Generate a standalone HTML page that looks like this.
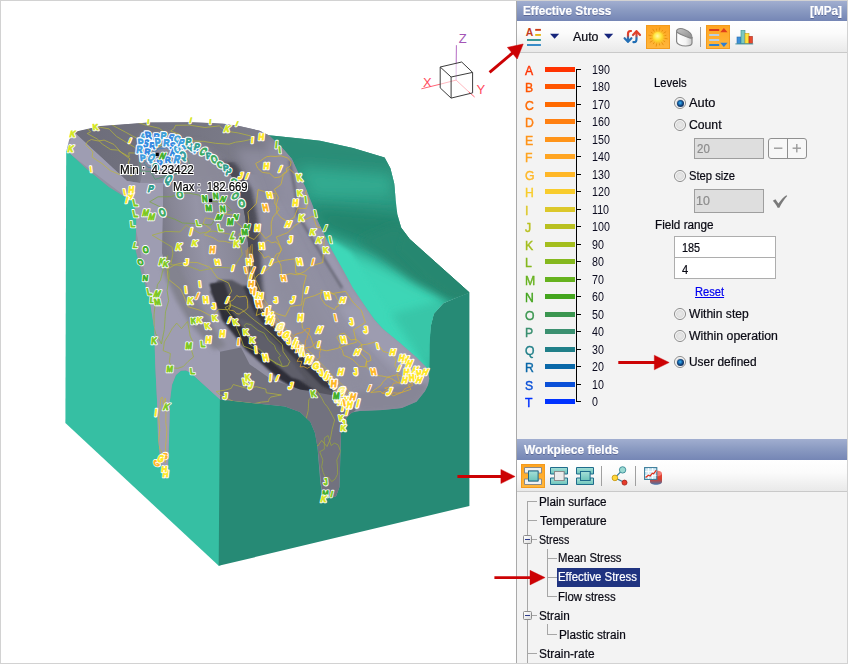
<!DOCTYPE html>
<html lang="en">
<head>
<meta charset="utf-8">
<title>Effective Stress</title>
<style>
html,body{margin:0;padding:0;}
body{width:848px;height:664px;position:relative;overflow:hidden;background:#fff;font-family:"Liberation Sans",sans-serif;font-size:12px;color:#0a0a14;}
#frame{position:absolute;left:0;top:0;width:846px;height:662px;border:1px solid #d2d2d2;z-index:50;pointer-events:none;}
#view{position:absolute;left:0;top:0;width:516px;height:664px;}
#panel{position:absolute;left:516px;top:0;width:332px;height:664px;background:#f3f3f3;border-left:1px solid #aaaaaa;box-sizing:border-box;}
.hdr{position:absolute;left:517px;width:331px;background:linear-gradient(#a1aed0,#8b9bc2 45%,#7586b5);}
#hdr1{top:1px;height:20px;}
#hdr2{top:439px;height:21px;}
.tb{position:absolute;left:517px;width:331px;background:linear-gradient(#ffffff,#fbfbfb 40%,#e9e9e9);border-bottom:1px solid #c9c9c9;box-sizing:border-box;}
#tb1{top:21px;height:32px;}
#tb2{top:460px;height:32px;}
span.t,span.hb,span.halo{position:absolute;white-space:pre;line-height:14px;height:14px;font-size:12px;transform-origin:0 0;display:inline-block;-webkit-text-stroke:0.22px currentColor;}
span.hb{font-weight:bold;color:#fff;text-shadow:0 1px 0 rgba(60,70,120,.55);}
span.halo{color:#000;text-shadow:-1px 0 0 #fff,1px 0 0 #fff,0 -1px 0 #fff,0 1px 0 #fff,-1px -1px 0 #fff,1px 1px 0 #fff,-1px 1px 0 #fff,1px -1px 0 #fff;}
span.ll{position:absolute;left:525.2px;font-size:13px;line-height:15px;height:15px;-webkit-text-stroke:0.42px currentColor;transform:scaleX(0.94);transform-origin:0 0;display:inline-block;}
span.ln{position:absolute;left:592.3px;font-size:12px;line-height:14px;height:14px;transform:scaleX(0.89);transform-origin:0 0;display:inline-block;color:#0a0a1e;}
i.lb{position:absolute;left:545px;width:30px;height:5px;display:block;}
i.lt{position:absolute;left:577px;width:4px;height:1px;background:#000;display:block;}
#axis{position:absolute;left:576px;top:69px;width:1px;height:333px;background:#000;}
.radio{position:absolute;left:674px;width:10px;height:10px;border-radius:50%;border:1px solid #8a8a8a;background:radial-gradient(circle at 50% 50%,#e9e9e9 0,#dedede 50%,#fcfcfc 66%,#ffffff 100%);}
.radio.on::after{content:"";position:absolute;left:1.5px;top:1.5px;width:7px;height:7px;border-radius:50%;background:radial-gradient(circle at 45% 42%,#40b8f4 0,#1c7cc4 24%,#103a70 54%,#0a2850 100%);}
.inp{position:absolute;box-sizing:border-box;border:1px solid #a5a5a5;}
.inp.dis{background:#dedede;border-color:#9e9e9e;}
.inp.en{background:#fff;border-color:#adadad;}
#pm{position:absolute;left:768px;top:138px;width:39px;height:21px;box-sizing:border-box;border:1px solid #8f8f8f;border-radius:3px;background:#f7f7f7;}
#pm::before{content:"";position:absolute;left:18px;top:0;width:1px;height:19px;background:#8f8f8f;}
#sel{position:absolute;left:557px;top:568px;width:83px;height:19px;background:#1f3380;}
.tl{position:absolute;background:#a6a6a6;}
.exp{position:absolute;left:523px;width:7px;height:7px;border-radius:1.5px;border:1px solid #8c8c8c;background:linear-gradient(135deg,#fff,#dcdcdc);}
.exp::after{content:"";position:absolute;left:1px;top:3px;width:5px;height:1px;background:#2d3c8c;}
.obox{position:absolute;width:22px;height:22px;border:1px solid #f39b1e;background:linear-gradient(#ffa521,#ffb63c);}
.sep{position:absolute;width:1px;background:#a0a0a0;}
svg{position:absolute;overflow:visible;}
</style>
</head>
<body>
<div id="view">
<svg id="model" width="516" height="664" viewBox="0 0 516 664" style="left:0;top:0">
<defs>
  <filter id="b1" x="-20%" y="-20%" width="140%" height="140%"><feGaussianBlur stdDeviation="1.2"/></filter>
  <filter id="b2" x="-20%" y="-20%" width="140%" height="140%"><feGaussianBlur stdDeviation="2.2"/></filter>
  <filter id="b4" x="-30%" y="-30%" width="160%" height="160%"><feGaussianBlur stdDeviation="4"/></filter>
  <filter id="b7" x="-40%" y="-40%" width="180%" height="180%"><feGaussianBlur stdDeviation="7"/></filter>
  <clipPath id="cTop"><path d="M266,134.6 L269,135.2 L300,138.4 L320,140.8 L353,148 L384.6,157.6 L390.4,168.2 L394.2,183.6 L396,203 L397.3,214 L401.1,227.4 L409.6,239 L469.4,292.6 L458,297 L443.3,303.3 L433.8,313.8 L430.6,326.5 L429.6,345 L429.3,382 L300,260 Z"/></clipPath>
  <clipPath id="cGrey"><path d="M73.9,132 L100.3,126 L135,123.6 L149,122.6 L190,122.2 L222.5,123.5 L238,125.8 L243.7,127 L259.2,130.6 L269.1,135.6 L281.9,147.5 L291.8,158.8 L296,168 L305.3,187 L313,206.4 L317.3,220 L331.6,250 L343,270 L352.7,288 L367.8,310.4 L374.5,320 L382.7,329 L399.6,342.7 L416.5,357.5 L427,368 L429.3,378.5 L428,385 L424.9,391.2 L416.5,401.7 L401.7,408 L382.7,410 L359.6,411 L352,412.6 L347,417 L343,425 L341,434 L339.5,487 L336,496.5 L322.5,497 L320.3,482 L317.5,447.5 L315,433 L310.4,422 L300,412 L285,406.5 L220,399.5 L190.5,372.7 L186,370.6 L181,370.8 L176,375 L172,385 L170,400 L169,440 L167.8,477 L164.4,478.8 L160,457 L158,437 L157,400 L155.2,364 L154.3,329 L149,295.4 L141.6,274.3 L135.3,249 L136.4,221.6 L134.5,200 L125,197 L109.2,187.3 L86.1,168.6 L66.6,150.2 L69.2,139.4 Z"/></clipPath>
</defs>
<path d="M66.2,150.5 L65.4,423 L218.7,565.8 L221.2,565 L221.4,300 L140,180 Z" fill="#36bfa3"/>
<path d="M220.3,340 L218.7,565.8 L469.4,505.9 L469.4,292.6 L458,297 L443.3,303.3 L433.8,313.8 L430.6,326.5 L429.6,340 Z" fill="#268a75"/>
<g clip-path="url(#cTop)">
  <rect x="260" y="128" width="220" height="262" fill="#2b9780"/>
  <path d="M262,126 L392,150 L400,196 L300,186 Z" fill="#298d77" filter="url(#b4)"/>
  <path d="M296,166 L392,174 L394,198 L312,198 Z" fill="#33aa90" filter="url(#b7)"/>
  <path d="M306,206 L402,214 L414,238 L478,294 L444,290 L384,252 L326,230 Z" fill="#24856d" filter="url(#b7)"/>
  <path d="M318,236 L370,258 L450,297 L430,330 L428,374 L396,346 L352,296 Z" fill="#3cd6b6" filter="url(#b7)"/>
  <path d="M326,236 L350,252 L400,330 L428,366 L424,372 L380,330 L340,280 Z" fill="#3cd8b8" filter="url(#b2)"/>
  <path d="M392,314 L442,300 L431,374 Z" fill="#37c6a8" filter="url(#b4)"/>
  <path d="M396,224 L476,290 L476,302 L446,299 L412,280 L382,256 L358,240 Z" fill="#26876f" filter="url(#b4)"/>
  <path d="M404,232 L474,290 L474,300 L452,296 L424,276 L398,250 Z" fill="#26876f" filter="url(#b2)"/>
</g>
<g clip-path="url(#cGrey)">
<rect x="60" y="115" width="380" height="390" fill="#9291a3"/>
<linearGradient id="gSlab" gradientUnits="userSpaceOnUse" x1="74" y1="130" x2="250" y2="150"><stop offset="0" stop-color="#6c6c7a"/><stop offset="0.5" stop-color="#73737f"/><stop offset="1" stop-color="#7c7c8a"/></linearGradient>
<path d="M73.9,132 L100.3,126 L149,122 L190,121 L238,125 L266,132 L284,151 L262,176 L240,172 L226,166 L200,146 L168,135 L150,150 L140,183 L127,181 Z" fill="url(#gSlab)"/>
<path d="M236,150 L290,150 L300,200 L262,200 Z" fill="#8b8a9b" filter="url(#b4)"/>
<path d="M140,135 L168,133 L200,146 L226,166 L214,190 L165,186 L163,183 L140,183 Z" fill="#8b8a9b" filter="url(#b2)"/>
<path d="M66,151 L73.9,132 L127,181 L140,183 L163,183 L163,211 L162,253 L169,274 L180,300 L192,322 L220,352 L220,400 L190.5,372.7 L186,370.6 L181,370.8 L176,375 L172,385 L169,440 L168,480 L158,480 L150,300 L130,200 Z" fill="#9e9db2"/>
<path d="M218,160 L236,164 L252,190 L258,218 L261,249 L262,276 L264,302 L246,304 L243,276 L241,249 L238,218 L232,192 Z" fill="#4e4e59" filter="url(#b2)"/>
<linearGradient id="gTongue" gradientUnits="userSpaceOnUse" x1="163" y1="232" x2="251" y2="218"><stop offset="0" stop-color="#7b7b89"/><stop offset="0.14" stop-color="#878695"/><stop offset="0.42" stop-color="#9594a6"/><stop offset="0.75" stop-color="#8a8999"/><stop offset="1" stop-color="#7e7e8c"/></linearGradient>
<path d="M163,186 L166,170 L176,158 L196,150 L212,155 L224,163.5 L240,190.5 L245.3,217.7 L248.7,249.3 L249.8,276.4 L252,300 L240,316 L222,340 L206,336 L192,322 L180,300 L169,274 L162,253 L163,211 Z" fill="url(#gTongue)"/>
<path d="M160,262 L176,262 L196,300 L226,346 L214,350 L190,324 L176,300 L166,278 Z" fill="#83838f" filter="url(#b2)"/>
<path d="M166,150 L200,144 L224,162 L232,184 L170,190 Z" fill="#8a8998" filter="url(#b4)" opacity="0.8"/>
<path d="M266,133 L284,151 L305,187 L332,250 L353,288 L375,320 L427,368 L424,391 L400,380 L350,330 L318,280 L290,220 L272,170 Z" fill="#8f8ea0" filter="url(#b4)"/>
<path d="M300,180 L316,222 L343,272 L375,322 L427,370 L420,372 L366,322 L332,272 L306,222 Z" fill="#9b9aaf" filter="url(#b2)"/>
<path d="M289.5,160.8 L295.8,194.5 L296.9,213.5 L309.5,234.6 L322,255.7 L342,288" fill="none" stroke="#6d6d7b" stroke-width="2.6" filter="url(#b1)"/>
<path d="M356,300 L400,340 L428,368 L426,386 L396,372 L356,336 L336,306 Z" fill="#9d9cb0" filter="url(#b4)"/>
<path d="M262,200 L290,250 L330,330 L380,388 L350,398 L300,340 L272,290 Z" fill="#8e8d9e" filter="url(#b7)"/>
<clipPath id="cRightOfRidge"><path d="M224,163.5 L240,190.5 L245.3,217.7 L248.7,249.3 L249.8,276.4 L252,300 L300,300 L300,150 Z"/></clipPath>
<g clip-path="url(#cRightOfRidge)"><path d="M220,160 L232,162 L248,190 L254,218 L257,249 L258,276 L260,302 L248,304 L245,276 L244,249 L240,218 L234,192 Z" fill="#4b4b56" filter="url(#b2)"/></g>
<path d="M232,280 L247,288 L258,308 L277,334 L302,358 L326,383 L342,399 L318,397 L288,381 L250,347 L226,317 L210,292 L218,280 Z" fill="#565661" filter="url(#b1)"/>
<path d="M210,284 L222,284 L232,312 L254,342 L290,374 L314,390 L300,392 L280,380 L246,350 L222,320 Z" fill="#2f2f38" filter="url(#b1)"/>
<path d="M243,286 L250,286 L260,305 L279,331 L304,355 L328,380 L336,392 L322,386 L298,362 L272,336 L254,312 Z" fill="#383842" filter="url(#b1)"/>
<path d="M210,284 L224,282 L230,300 L228,314 L218,308 Z" fill="#34343d" filter="url(#b1)"/>
<path d="M236,318 L250,322 L292,362 L306,380 L292,378 L258,350 Z" fill="#5f5f6b" filter="url(#b1)"/>
<path d="M356,392 L410,384 L428,384 L420,400 L400,410 L360,412 Z" fill="#878696" filter="url(#b2)"/>
<path d="M220,351.7 L241,347.5 L249.6,364.3 L270.7,379 L300,389.6 L331,395 L348,401 L356,410 L347,417 L341,434 L339.5,487 L336,497 L322.5,497 L317.5,447.5 L310.4,422 L285,406.5 L220,399.5 Z" fill="#72727f"/>
</g>
<g clip-path="url(#cGrey)" fill="none" stroke-width="0.75" opacity="0.95">
<path d="M133.7,153.0 L128.8,152.8 L129.2,156.8 L117.5,150.1 L110.8,149.6 L102.3,144.1 L97.6,139.2 L87.3,133.5 L90.7,131.8 L84.7,126.2 L92.2,127.9 L96.4,128.0 L100.6,127.3 L109.1,128.9 L116.6,136.5 L123.9,140.9 L134.2,147.0 L142.6,153.9 Z" stroke="#b7b83a" stroke-linejoin="round"/>
<path d="M189.9,147.3 L183.0,148.2 L184.9,153.5 L162.5,145.0 L154.8,147.6 L141.8,140.7 L132.9,136.2 L125.6,132.2 L117.1,127.7 L105.0,121.1 L121.3,123.5 L121.2,119.8 L131.9,120.6 L146.3,125.2 L159.5,128.4 L166.2,133.8 L173.3,137.7 L180.8,141.8 Z" stroke="#b7b83a" stroke-linejoin="round"/>
<path d="M251.6,139.2 L243.8,141.0 L235.5,142.2 L229.1,144.2 L215.6,143.3 L203.5,141.4 L187.2,140.8 L177.2,137.5 L179.3,134.3 L170.6,131.0 L174.2,128.6 L175.6,125.3 L189.4,125.1 L204.9,127.5 L219.3,125.9 L225.4,131.1 L238.1,132.9 L251.0,136.0 Z" stroke="#b7b83a" stroke-linejoin="round"/>
<path d="M130.6,170.7 L131.7,175.6 L122.4,170.9 L119.3,174.5 L110.2,170.5 L102.0,163.6 L92.1,157.1 L92.9,151.9 L85.8,144.7 L87.7,141.4 L91.3,139.5 L98.3,141.0 L104.1,140.1 L113.9,144.4 L121.4,152.7 L130.0,158.8 L128.1,163.1 L138.3,171.4 Z" stroke="#c0b83a" stroke-linejoin="round"/>
<path d="M188.1,160.0 L191.2,167.9 L183.5,173.7 L171.4,173.7 L164.2,176.6 L155.1,179.4 L150.5,171.4 L140.5,171.3 L140.1,165.0 L139.6,160.0 L141.6,155.4 L137.1,146.7 L149.7,147.6 L156.1,144.8 L164.2,143.4 L175.7,141.2 L175.2,151.1 L183.7,154.0 Z" stroke="#4b9a6a" stroke-linejoin="round"/>
<path d="M183.5,158.0 L185.5,163.0 L181.3,167.1 L175.8,170.5 L167.7,168.4 L162.0,169.3 L156.7,167.6 L148.2,167.4 L143.7,163.2 L150.5,158.0 L151.2,154.6 L153.3,151.4 L157.3,149.2 L161.9,146.3 L168.3,145.6 L172.8,149.0 L175.0,152.4 L181.1,154.1 Z" stroke="#3a8aa0" stroke-linejoin="round"/>
<path d="M178.2,155.0 L178.7,157.8 L178.6,161.4 L174.1,162.7 L169.9,162.9 L166.0,163.4 L162.0,162.6 L161.7,158.9 L155.4,158.3 L155.3,155.0 L155.5,151.7 L158.2,149.0 L162.8,148.5 L166.2,147.6 L169.5,148.9 L173.9,147.6 L174.4,151.1 L175.8,152.9 Z" stroke="#2f7fd0" stroke-linejoin="round"/>
<path d="M217.9,215.7 L214.4,220.0 L211.1,225.0 L200.2,224.0 L191.6,223.4 L182.5,223.0 L174.7,219.2 L164.3,215.7 L166.1,209.8 L149.7,201.8 L158.0,196.8 L171.3,196.7 L178.3,193.9 L187.9,193.0 L198.6,195.0 L205.6,200.6 L223.3,202.6 L231.5,210.4 Z" stroke="#7aa83a" stroke-linejoin="round"/>
<path d="M237.5,261.6 L233.4,268.1 L219.3,267.3 L210.5,268.7 L200.2,270.7 L188.7,266.2 L170.7,264.6 L172.9,253.6 L172.1,247.1 L152.1,235.2 L165.8,231.4 L179.9,231.9 L186.2,225.3 L199.8,233.3 L213.2,231.1 L231.4,234.4 L240.3,244.6 L242.3,254.4 Z" stroke="#a9b23a" stroke-linejoin="round"/>
<path d="M230.8,304.1 L227.9,309.7 L218.6,309.3 L212.6,316.9 L200.7,310.5 L188.1,306.7 L184.0,296.4 L180.5,289.0 L168.2,279.1 L167.1,269.3 L175.4,264.5 L185.4,262.2 L197.2,262.5 L209.8,267.2 L217.4,277.8 L228.5,282.9 L231.7,291.1 L228.1,296.9 Z" stroke="#c4b83a" stroke-linejoin="round"/>
<path d="M286.2,168.5 L286.7,171.8 L283.5,173.4 L280.6,176.8 L274.7,177.8 L269.6,173.3 L262.3,172.4 L257.7,168.2 L255.7,163.5 L260.9,160.6 L263.7,158.5 L266.7,156.7 L270.8,156.2 L275.2,156.5 L281.0,155.8 L287.5,157.8 L291.2,162.0 L290.2,166.2 Z" stroke="#d6b82c" stroke-linejoin="round"/>
<path d="M308.6,200.1 L306.2,208.6 L297.8,208.1 L294.2,217.4 L287.4,221.5 L281.5,218.0 L276.9,213.1 L276.3,204.8 L278.4,197.3 L274.2,189.5 L281.0,184.5 L283.2,175.0 L289.5,169.0 L295.5,174.7 L300.6,176.2 L308.6,175.2 L309.9,183.9 L305.5,192.8 Z" stroke="#d6b82c" stroke-linejoin="round"/>
<path d="M272.9,217.2 L271.2,223.0 L271.4,234.6 L265.6,238.5 L260.5,232.4 L254.1,239.5 L248.5,236.9 L247.5,227.8 L248.8,219.4 L247.9,212.1 L253.0,207.1 L256.4,203.4 L258.1,189.6 L264.1,191.5 L268.8,193.9 L275.2,193.5 L274.8,203.7 L279.4,209.2 Z" stroke="#d6b82c" stroke-linejoin="round"/>
<path d="M322.8,262.5 L311.1,265.9 L304.8,271.5 L297.5,274.8 L290.8,273.7 L281.6,275.3 L280.9,265.2 L277.1,258.4 L281.7,249.3 L276.3,237.0 L287.9,232.6 L294.6,225.6 L302.9,220.6 L313.3,216.0 L316.7,227.0 L327.3,228.4 L324.1,241.1 L323.5,250.9 Z" stroke="#d6b82c" stroke-linejoin="round"/>
<path d="M301.7,304.9 L290.5,306.3 L285.4,316.3 L276.8,313.7 L270.6,309.5 L256.2,315.5 L259.3,301.5 L253.1,294.6 L250.8,284.0 L257.9,274.9 L267.0,269.9 L274.4,262.6 L284.1,260.3 L295.0,258.8 L295.9,273.0 L306.3,275.4 L303.5,286.0 L302.7,294.7 Z" stroke="#d6b82c" stroke-linejoin="round"/>
<path d="M356.4,342.3 L345.9,345.1 L337.0,348.5 L326.5,350.8 L314.6,348.2 L310.2,335.7 L302.4,328.0 L301.6,318.0 L302.5,308.6 L304.6,298.6 L314.6,295.7 L323.1,291.9 L333.0,293.4 L345.6,291.4 L352.8,302.0 L361.5,310.8 L365.4,322.5 L353.6,329.8 Z" stroke="#d6b82c" stroke-linejoin="round"/>
<path d="M366.2,362.0 L365.4,366.9 L359.6,366.4 L353.0,359.9 L348.9,357.5 L343.5,355.3 L342.5,350.6 L339.4,346.6 L340.5,343.7 L336.9,337.3 L339.6,334.3 L344.2,333.1 L350.9,340.0 L356.4,339.3 L361.5,344.0 L362.0,349.3 L369.8,354.8 L371.1,360.4 Z" stroke="#d6b82c" stroke-linejoin="round"/>
<path d="M396.8,374.1 L400.1,383.7 L389.7,377.7 L383.2,376.2 L374.7,375.2 L366.9,367.3 L366.5,359.7 L360.6,353.3 L358.5,347.3 L361.9,344.8 L366.7,344.3 L370.8,343.2 L376.3,341.6 L383.0,351.3 L391.4,353.7 L396.1,360.4 L394.8,365.1 L399.3,371.4 Z" stroke="#d6b82c" stroke-linejoin="round"/>
<path d="M417.5,378.0 L415.7,381.5 L408.3,384.9 L411.0,389.3 L401.9,392.4 L393.3,395.9 L388.4,392.7 L382.3,393.6 L380.9,391.5 L370.7,392.5 L377.1,388.0 L381.0,385.1 L383.0,381.8 L387.6,377.1 L396.6,374.8 L402.3,376.5 L406.7,377.0 L418.4,374.2 Z" stroke="#d8b42c" stroke-linejoin="round"/>
<path d="M411.9,383.7 L412.5,385.5 L406.6,387.9 L404.0,389.6 L402.2,392.4 L397.2,393.2 L393.9,392.7 L386.4,395.8 L385.0,393.9 L382.4,392.8 L388.0,389.7 L384.6,388.1 L392.0,386.4 L393.5,383.2 L398.8,382.7 L402.9,382.4 L407.6,381.6 L412.9,381.2 Z" stroke="#e0a82c" stroke-linejoin="round"/>
<path d="M338.6,305.9 L336.2,306.8 L334.8,309.6 L330.9,307.8 L327.9,306.0 L325.0,304.3 L323.4,301.7 L321.3,299.2 L320.3,296.3 L321.2,294.0 L321.1,290.1 L325.9,291.7 L329.0,290.9 L332.2,293.7 L335.6,295.1 L336.5,298.3 L339.0,300.8 L337.9,303.0 Z" stroke="#d6b82c" stroke-linejoin="round"/>
<path d="M281.3,250.0 L279.7,252.8 L276.3,254.2 L274.9,256.8 L272.2,259.8 L268.6,256.1 L264.1,258.2 L262.6,254.9 L260.6,252.7 L258.1,250.0 L261.2,247.4 L262.3,244.8 L264.5,242.3 L267.8,240.0 L271.6,242.8 L275.9,241.8 L278.5,244.3 L280.1,247.1 Z" stroke="#d6b82c" stroke-linejoin="round"/>
<path d="M287.7,365.8 L282.2,366.6 L272.2,360.6 L265.0,357.8 L256.7,351.3 L243.6,346.1 L240.2,335.9 L236.8,328.4 L236.4,323.0 L225.1,307.5 L230.7,304.8 L242.2,309.9 L254.4,320.2 L263.7,327.3 L272.8,335.3 L282.4,344.7 L283.1,351.6 L289.8,361.4 Z" stroke="#b5b53a" stroke-linejoin="round"/>
<path d="M278.5,357.4 L282.2,365.5 L276.0,363.9 L266.9,356.3 L260.2,349.6 L251.1,345.4 L249.3,338.6 L245.4,333.0 L247.8,331.4 L244.2,325.5 L246.2,323.6 L250.9,324.6 L258.0,330.4 L264.1,333.1 L268.3,340.1 L274.4,345.3 L275.9,349.6 L280.6,355.8 Z" stroke="#9aa83a" stroke-linejoin="round"/>
<path d="M270.7,397.1 L269.0,398.9 L268.5,401.5 L261.3,402.1 L254.2,403.7 L244.3,402.5 L233.3,401.3 L226.2,398.2 L220.3,395.1 L216.2,391.6 L225.7,390.0 L231.2,388.4 L233.2,384.5 L246.7,388.3 L256.3,386.7 L265.8,389.1 L266.3,392.8 L281.4,394.9 Z" stroke="#b5b53a" stroke-linejoin="round"/>
<path d="M334.6,420.0 L332.1,429.5 L330.4,438.9 L327.0,446.5 L321.7,440.4 L317.9,445.9 L314.0,442.6 L309.1,439.8 L306.8,430.4 L305.8,420.0 L308.2,410.7 L308.8,399.6 L313.4,395.2 L317.7,391.6 L321.8,398.3 L324.4,403.4 L327.3,406.7 L330.4,411.8 Z" stroke="#a9ad3a" stroke-linejoin="round"/>
<path d="M190.7,347.2 L193.5,356.9 L188.0,361.5 L183.3,366.5 L177.9,368.3 L172.6,367.9 L169.4,362.2 L170.4,353.5 L163.2,350.6 L164.4,341.8 L168.6,335.0 L172.1,328.7 L176.7,323.1 L181.5,328.6 L187.6,321.5 L189.2,330.1 L190.1,336.1 L192.5,340.9 Z" stroke="#9fb23a" stroke-linejoin="round"/>
<path d="M168.7,300.7 L165.5,311.8 L164.3,329.5 L161.4,344.0 L159.1,339.2 L157.4,336.5 L155.6,333.8 L154.1,327.7 L154.0,315.0 L155.6,299.4 L157.4,284.7 L160.5,280.1 L162.4,272.1 L164.5,266.1 L167.6,255.6 L167.7,269.6 L169.4,273.9 L167.1,290.5 Z" stroke="#8fb03a" stroke-linejoin="round"/>
<path d="M336.8,460.0 L337.4,466.0 L337.6,474.1 L335.0,479.2 L331.7,481.6 L328.6,477.4 L325.5,477.5 L323.2,472.6 L321.7,466.7 L322.9,460.0 L319.7,451.7 L324.3,449.3 L324.3,438.0 L328.1,435.5 L331.1,445.6 L334.4,443.1 L338.1,444.8 L340.7,451.4 Z" stroke="#9aa83a" stroke-linejoin="round"/>
<path d="M166.9,430.0 L166.3,438.9 L165.6,446.2 L165.5,462.5 L163.6,454.8 L162.3,460.9 L161.4,450.8 L159.9,449.5 L158.3,442.9 L159.8,430.0 L158.6,417.9 L159.9,410.6 L160.6,398.4 L162.2,397.1 L163.6,404.9 L165.4,398.2 L166.0,410.9 L165.8,422.5 Z" stroke="#c8b83a" stroke-linejoin="round"/>
<path d="M238.8,234.3 L241.5,240.1 L236.6,242.8 L230.3,242.9 L224.4,241.3 L218.3,241.1 L213.2,237.7 L204.4,234.8 L211.0,229.3 L203.2,223.3 L205.3,217.9 L215.6,219.7 L217.6,212.0 L225.8,214.1 L234.1,215.1 L236.6,222.4 L241.1,226.2 L243.2,230.9 Z" stroke="#c4b83a" stroke-linejoin="round"/>
<path d="M247.8,308.0 L244.5,310.8 L241.6,312.3 L239.2,314.1 L236.6,313.6 L234.8,311.7 L233.0,310.5 L228.8,310.1 L230.8,305.9 L228.5,302.1 L232.7,300.3 L234.6,298.1 L236.7,295.5 L239.3,296.9 L241.9,296.6 L246.0,296.1 L247.4,299.7 L247.6,303.8 Z" stroke="#d6b82c" stroke-linejoin="round"/>
<path d="M316.0,361.2 L312.2,365.7 L307.3,368.3 L303.9,366.6 L300.0,366.9 L301.9,361.4 L297.0,361.3 L299.6,356.8 L300.1,352.7 L304.0,348.8 L308.4,347.3 L311.6,347.0 L317.3,341.0 L317.1,346.6 L320.7,346.5 L320.5,349.9 L319.5,353.3 L319.8,357.3 Z" stroke="#e0a82c" stroke-linejoin="round"/>
<path d="M305.3,345.5 L300.9,346.0 L297.5,349.4 L295.2,348.3 L292.0,349.3 L291.3,347.0 L292.2,344.1 L292.9,341.7 L294.3,339.0 L294.9,334.7 L299.0,333.1 L302.0,332.7 L306.6,328.5 L309.9,328.5 L308.9,332.7 L307.6,335.9 L307.2,338.3 L305.3,340.9 Z" stroke="#e8a020" stroke-linejoin="round"/>
<path d="M246.0,250.0 L248.0,282.0 L259.0,307.0 L278.0,333.0 L303.0,357.0 L327.0,382.0 L348.0,402.0" stroke="#e8b020" stroke-width="0.6"/>
<path d="M247.5,248.5 L249.5,280.5 L260.5,305.5 L279.5,331.5 L304.5,355.5 L328.5,380.5 L349.5,400.5" stroke="#f0a018" stroke-width="0.6"/>
<path d="M249.0,247.0 L251.0,279.0 L262.0,304.0 L281.0,330.0 L306.0,354.0 L330.0,379.0 L351.0,399.0" stroke="#e8c030" stroke-width="0.6"/>
<path d="M250.5,245.5 L252.5,277.5 L263.5,302.5 L282.5,328.5 L307.5,352.5 L331.5,377.5 L352.5,397.5" stroke="#f0a018" stroke-width="0.6"/>
<path d="M252.0,244.0 L254.0,276.0 L265.0,301.0 L284.0,327.0 L309.0,351.0 L333.0,376.0 L354.0,396.0" stroke="#d6b82c" stroke-width="0.6"/>
</g>
<g font-family="Liberation Sans, sans-serif" font-weight="bold" text-anchor="middle" stroke-linejoin="round">
<text transform="translate(95.7,130.0) skewX(6) scale(0.78,0.85)" font-size="10" fill="#fff" stroke="#fff" stroke-width="2.8">K</text><text transform="translate(95.7,130.0) skewX(6) scale(0.78,0.85)" font-size="10" fill="#d4e61e" stroke="#d4e61e" stroke-width="0.9">K</text>
<text transform="translate(72.0,137.0) skewX(-14) scale(0.78,0.90)" font-size="10" fill="#fff" stroke="#fff" stroke-width="2.8">K</text><text transform="translate(72.0,137.0) skewX(-14) scale(0.78,0.90)" font-size="10" fill="#d4e61e" stroke="#d4e61e" stroke-width="0.9">K</text>
<text transform="translate(70.0,152.0) skewX(-14) scale(0.78,0.93)" font-size="10" fill="#fff" stroke="#fff" stroke-width="2.8">K</text><text transform="translate(70.0,152.0) skewX(-14) scale(0.78,0.93)" font-size="10" fill="#d4e61e" stroke="#d4e61e" stroke-width="0.9">K</text>
<text transform="translate(226.0,132.0) skewX(-22) scale(0.78,0.93)" font-size="10" fill="#fff" stroke="#fff" stroke-width="2.8">K</text><text transform="translate(226.0,132.0) skewX(-22) scale(0.78,0.93)" font-size="10" fill="#d4e61e" stroke="#d4e61e" stroke-width="0.9">K</text>
<text transform="translate(129.0,143.0) skewX(-22) scale(0.78,0.82)" font-size="8" fill="#fff" stroke="#fff" stroke-width="2.8">I</text><text transform="translate(129.0,143.0) skewX(-22) scale(0.78,0.82)" font-size="8" fill="#ffe81e" stroke="#ffe81e" stroke-width="0.9">I</text>
<text transform="translate(91.0,172.0) skewX(6) scale(0.78,0.98)" font-size="8" fill="#fff" stroke="#fff" stroke-width="2.8">I</text><text transform="translate(91.0,172.0) skewX(6) scale(0.78,0.98)" font-size="8" fill="#ffe81e" stroke="#ffe81e" stroke-width="0.9">I</text>
<text transform="translate(190.0,122.5) skewX(-14) scale(0.78,0.97)" font-size="8" fill="#fff" stroke="#fff" stroke-width="2.8">I</text><text transform="translate(190.0,122.5) skewX(-14) scale(0.78,0.97)" font-size="8" fill="#d4e61e" stroke="#d4e61e" stroke-width="0.9">I</text>
<text transform="translate(148.0,124.0) skewX(-6) scale(0.78,0.81)" font-size="8" fill="#fff" stroke="#fff" stroke-width="2.8">I</text><text transform="translate(148.0,124.0) skewX(-6) scale(0.78,0.81)" font-size="8" fill="#d4e61e" stroke="#d4e61e" stroke-width="0.9">I</text>
<text transform="translate(210.0,123.5) skewX(-6) scale(0.78,0.85)" font-size="8" fill="#fff" stroke="#fff" stroke-width="2.8">I</text><text transform="translate(210.0,123.5) skewX(-6) scale(0.78,0.85)" font-size="8" fill="#d4e61e" stroke="#d4e61e" stroke-width="0.9">I</text>
<text transform="translate(236.0,126.0) skewX(-22) scale(0.78,0.84)" font-size="8" fill="#fff" stroke="#fff" stroke-width="2.8">I</text><text transform="translate(236.0,126.0) skewX(-22) scale(0.78,0.84)" font-size="8" fill="#d4e61e" stroke="#d4e61e" stroke-width="0.9">I</text>
<text transform="translate(125.0,195.0) skewX(12) scale(0.78,0.84)" font-size="10" fill="#fff" stroke="#fff" stroke-width="2.8">I</text><text transform="translate(125.0,195.0) skewX(12) scale(0.78,0.84)" font-size="10" fill="#ffe81e" stroke="#ffe81e" stroke-width="0.9">I</text>
<text transform="translate(129.0,199.0) skewX(-22) scale(0.78,0.87)" font-size="10" fill="#fff" stroke="#fff" stroke-width="2.8">H</text><text transform="translate(129.0,199.0) skewX(-22) scale(0.78,0.87)" font-size="10" fill="#ffe81e" stroke="#ffe81e" stroke-width="0.9">H</text>
<text transform="translate(126.0,203.0) skewX(-14) scale(0.78,0.89)" font-size="10" fill="#fff" stroke="#fff" stroke-width="2.8">I</text><text transform="translate(126.0,203.0) skewX(-14) scale(0.78,0.89)" font-size="10" fill="#ffe81e" stroke="#ffe81e" stroke-width="0.9">I</text>
<text transform="translate(131.0,193.0) skewX(-6) scale(0.78,0.95)" font-size="10" fill="#fff" stroke="#fff" stroke-width="2.8">H</text><text transform="translate(131.0,193.0) skewX(-6) scale(0.78,0.95)" font-size="10" fill="#ffe81e" stroke="#ffe81e" stroke-width="0.9">H</text>
<text transform="translate(142.0,140.0) skewX(-22) scale(0.78,0.82)" font-size="11" fill="#fff" stroke="#fff" stroke-width="3.5">P</text><text transform="translate(142.0,140.0) skewX(-22) scale(0.78,0.82)" font-size="11" fill="#3aa0d8" stroke="#3aa0d8" stroke-width="0.9">P</text>
<text transform="translate(149.0,139.0) skewX(12) scale(0.78,0.94)" font-size="11" fill="#fff" stroke="#fff" stroke-width="3.5">R</text><text transform="translate(149.0,139.0) skewX(12) scale(0.78,0.94)" font-size="11" fill="#2f86e0" stroke="#2f86e0" stroke-width="0.9">R</text>
<text transform="translate(156.0,140.0) skewX(-6) scale(0.78,0.84)" font-size="11" fill="#fff" stroke="#fff" stroke-width="3.5">R</text><text transform="translate(156.0,140.0) skewX(-6) scale(0.78,0.84)" font-size="11" fill="#2f86e0" stroke="#2f86e0" stroke-width="0.9">R</text>
<text transform="translate(163.0,139.0) skewX(-6) scale(0.78,0.87)" font-size="11" fill="#fff" stroke="#fff" stroke-width="3.5">P</text><text transform="translate(163.0,139.0) skewX(-6) scale(0.78,0.87)" font-size="11" fill="#3aa0d8" stroke="#3aa0d8" stroke-width="0.9">P</text>
<text transform="translate(170.0,141.0) skewX(-22) scale(0.78,0.84)" font-size="11" fill="#fff" stroke="#fff" stroke-width="3.5">R</text><text transform="translate(170.0,141.0) skewX(-22) scale(0.78,0.84)" font-size="11" fill="#2f86e0" stroke="#2f86e0" stroke-width="0.9">R</text>
<text transform="translate(177.0,142.0) skewX(-6) scale(0.78,0.81)" font-size="11" fill="#fff" stroke="#fff" stroke-width="3.5">Q</text><text transform="translate(177.0,142.0) skewX(-6) scale(0.78,0.81)" font-size="11" fill="#3aa0d8" stroke="#3aa0d8" stroke-width="0.9">Q</text>
<text transform="translate(145.0,147.0) skewX(-14) scale(0.78,0.96)" font-size="11" fill="#fff" stroke="#fff" stroke-width="3.5">S</text><text transform="translate(145.0,147.0) skewX(-14) scale(0.78,0.96)" font-size="11" fill="#2f86e0" stroke="#2f86e0" stroke-width="0.9">S</text>
<text transform="translate(152.0,149.0) skewX(-6) scale(0.78,0.88)" font-size="11" fill="#fff" stroke="#fff" stroke-width="3.5">R</text><text transform="translate(152.0,149.0) skewX(-6) scale(0.78,0.88)" font-size="11" fill="#2f86e0" stroke="#2f86e0" stroke-width="0.9">R</text>
<text transform="translate(172.0,149.0) skewX(-6) scale(0.78,0.84)" font-size="11" fill="#fff" stroke="#fff" stroke-width="3.5">S</text><text transform="translate(172.0,149.0) skewX(-6) scale(0.78,0.84)" font-size="11" fill="#2f86e0" stroke="#2f86e0" stroke-width="0.9">S</text>
<text transform="translate(147.0,155.0) skewX(-6) scale(0.78,0.82)" font-size="11" fill="#fff" stroke="#fff" stroke-width="3.5">R</text><text transform="translate(147.0,155.0) skewX(-6) scale(0.78,0.82)" font-size="11" fill="#2f86e0" stroke="#2f86e0" stroke-width="0.9">R</text>
<text transform="translate(172.0,156.0) skewX(-22) scale(0.78,0.96)" font-size="11" fill="#fff" stroke="#fff" stroke-width="3.5">R</text><text transform="translate(172.0,156.0) skewX(-22) scale(0.78,0.96)" font-size="11" fill="#2f86e0" stroke="#2f86e0" stroke-width="0.9">R</text>
<text transform="translate(178.0,153.0) skewX(12) scale(0.78,0.90)" font-size="11" fill="#fff" stroke="#fff" stroke-width="3.5">Q</text><text transform="translate(178.0,153.0) skewX(12) scale(0.78,0.90)" font-size="11" fill="#3aa0d8" stroke="#3aa0d8" stroke-width="0.9">Q</text>
<text transform="translate(168.0,163.0) skewX(6) scale(0.78,0.82)" font-size="11" fill="#fff" stroke="#fff" stroke-width="3.5">R</text><text transform="translate(168.0,163.0) skewX(6) scale(0.78,0.82)" font-size="11" fill="#2f86e0" stroke="#2f86e0" stroke-width="0.9">R</text>
<text transform="translate(160.0,167.0) skewX(6) scale(0.78,0.93)" font-size="11" fill="#fff" stroke="#fff" stroke-width="3.5">R</text><text transform="translate(160.0,167.0) skewX(6) scale(0.78,0.93)" font-size="11" fill="#2f86e0" stroke="#2f86e0" stroke-width="0.9">R</text>
<text transform="translate(184.0,147.0) skewX(-14) scale(0.78,0.93)" font-size="11" fill="#fff" stroke="#fff" stroke-width="3.5">Q</text><text transform="translate(184.0,147.0) skewX(-14) scale(0.78,0.93)" font-size="11" fill="#3aa0d8" stroke="#3aa0d8" stroke-width="0.9">Q</text>
<text transform="translate(150.0,161.0) skewX(-22) scale(0.78,0.93)" font-size="11" fill="#fff" stroke="#fff" stroke-width="3.5">Q</text><text transform="translate(150.0,161.0) skewX(-22) scale(0.78,0.93)" font-size="11" fill="#3aa0d8" stroke="#3aa0d8" stroke-width="0.9">Q</text>
<text transform="translate(141.0,146.0) skewX(6) scale(0.78,0.94)" font-size="11" fill="#fff" stroke="#fff" stroke-width="3.5">P</text><text transform="translate(141.0,146.0) skewX(6) scale(0.78,0.94)" font-size="11" fill="#3a9ae0" stroke="#3a9ae0" stroke-width="0.9">P</text>
<text transform="translate(158.0,146.0) skewX(6) scale(0.78,1.00)" font-size="11" fill="#fff" stroke="#fff" stroke-width="3.5">P</text><text transform="translate(158.0,146.0) skewX(6) scale(0.78,1.00)" font-size="11" fill="#3a9ae0" stroke="#3a9ae0" stroke-width="0.9">P</text>
<text transform="translate(166.0,146.0) skewX(-6) scale(0.78,0.88)" font-size="11" fill="#fff" stroke="#fff" stroke-width="3.5">R</text><text transform="translate(166.0,146.0) skewX(-6) scale(0.78,0.88)" font-size="11" fill="#3a9ae0" stroke="#3a9ae0" stroke-width="0.9">R</text>
<text transform="translate(180.0,146.0) skewX(-22) scale(0.78,0.86)" font-size="11" fill="#fff" stroke="#fff" stroke-width="3.5">P</text><text transform="translate(180.0,146.0) skewX(-22) scale(0.78,0.86)" font-size="11" fill="#3a9ae0" stroke="#3a9ae0" stroke-width="0.9">P</text>
<text transform="translate(190.0,149.0) skewX(12) scale(0.78,0.98)" font-size="11" fill="#fff" stroke="#fff" stroke-width="3.5">Q</text><text transform="translate(190.0,149.0) skewX(12) scale(0.78,0.98)" font-size="11" fill="#2e9c9c" stroke="#2e9c9c" stroke-width="0.9">Q</text>
<text transform="translate(196.0,153.0) skewX(6) scale(0.78,0.88)" font-size="11" fill="#fff" stroke="#fff" stroke-width="3.5">P</text><text transform="translate(196.0,153.0) skewX(6) scale(0.78,0.88)" font-size="11" fill="#3a9ae0" stroke="#3a9ae0" stroke-width="0.9">P</text>
<text transform="translate(139.0,153.0) skewX(-6) scale(0.78,0.93)" font-size="11" fill="#fff" stroke="#fff" stroke-width="3.5">R</text><text transform="translate(139.0,153.0) skewX(-6) scale(0.78,0.93)" font-size="11" fill="#3a9ae0" stroke="#3a9ae0" stroke-width="0.9">R</text>
<text transform="translate(183.0,159.0) skewX(6) scale(0.78,0.95)" font-size="11" fill="#fff" stroke="#fff" stroke-width="3.5">Q</text><text transform="translate(183.0,159.0) skewX(6) scale(0.78,0.95)" font-size="11" fill="#2e9c9c" stroke="#2e9c9c" stroke-width="0.9">Q</text>
<text transform="translate(176.0,163.0) skewX(-14) scale(0.78,0.99)" font-size="11" fill="#fff" stroke="#fff" stroke-width="3.5">R</text><text transform="translate(176.0,163.0) skewX(-14) scale(0.78,0.99)" font-size="11" fill="#3a9ae0" stroke="#3a9ae0" stroke-width="0.9">R</text>
<text transform="translate(156.0,171.0) skewX(6) scale(0.78,0.98)" font-size="11" fill="#fff" stroke="#fff" stroke-width="3.5">Q</text><text transform="translate(156.0,171.0) skewX(6) scale(0.78,0.98)" font-size="11" fill="#2e9c9c" stroke="#2e9c9c" stroke-width="0.9">Q</text>
<text transform="translate(143.0,161.0) skewX(6) scale(0.78,0.82)" font-size="11" fill="#fff" stroke="#fff" stroke-width="3.5">P</text><text transform="translate(143.0,161.0) skewX(6) scale(0.78,0.82)" font-size="11" fill="#3a9ae0" stroke="#3a9ae0" stroke-width="0.9">P</text>
<text transform="translate(161.6,159.0) skewX(-22) scale(0.78,0.88)" font-size="10" fill="#fff" stroke="#fff" stroke-width="2.8">N</text><text transform="translate(161.6,159.0) skewX(-22) scale(0.78,0.88)" font-size="10" fill="#3fae2a" stroke="#3fae2a" stroke-width="0.9">N</text>
<text transform="translate(188.0,145.0) skewX(-6) scale(0.78,0.89)" font-size="11" fill="#fff" stroke="#fff" stroke-width="3.5">P</text><text transform="translate(188.0,145.0) skewX(-6) scale(0.78,0.89)" font-size="11" fill="#2e9c8c" stroke="#2e9c8c" stroke-width="0.9">P</text>
<text transform="translate(196.0,150.0) skewX(-14) scale(0.78,0.83)" font-size="11" fill="#fff" stroke="#fff" stroke-width="3.5">P</text><text transform="translate(196.0,150.0) skewX(-14) scale(0.78,0.83)" font-size="11" fill="#2e9c8c" stroke="#2e9c8c" stroke-width="0.9">P</text>
<text transform="translate(202.0,155.0) skewX(-22) scale(0.78,0.91)" font-size="11" fill="#fff" stroke="#fff" stroke-width="3.5">O</text><text transform="translate(202.0,155.0) skewX(-22) scale(0.78,0.91)" font-size="11" fill="#3aa860" stroke="#3aa860" stroke-width="0.9">O</text>
<text transform="translate(209.0,159.0) skewX(6) scale(0.78,0.82)" font-size="11" fill="#fff" stroke="#fff" stroke-width="3.5">P</text><text transform="translate(209.0,159.0) skewX(6) scale(0.78,0.82)" font-size="11" fill="#2e9c8c" stroke="#2e9c8c" stroke-width="0.9">P</text>
<text transform="translate(215.0,163.0) skewX(12) scale(0.78,0.99)" font-size="11" fill="#fff" stroke="#fff" stroke-width="3.5">O</text><text transform="translate(215.0,163.0) skewX(12) scale(0.78,0.99)" font-size="11" fill="#3aa860" stroke="#3aa860" stroke-width="0.9">O</text>
<text transform="translate(221.0,168.0) skewX(12) scale(0.78,0.83)" font-size="11" fill="#fff" stroke="#fff" stroke-width="3.5">O</text><text transform="translate(221.0,168.0) skewX(12) scale(0.78,0.83)" font-size="11" fill="#3aa860" stroke="#3aa860" stroke-width="0.9">O</text>
<text transform="translate(228.0,175.0) skewX(-6) scale(0.78,0.86)" font-size="11" fill="#fff" stroke="#fff" stroke-width="3.5">P</text><text transform="translate(228.0,175.0) skewX(-6) scale(0.78,0.86)" font-size="11" fill="#2e9c8c" stroke="#2e9c8c" stroke-width="0.9">P</text>
<text transform="translate(235.0,185.0) skewX(12) scale(0.78,0.83)" font-size="11" fill="#fff" stroke="#fff" stroke-width="3.5">O</text><text transform="translate(235.0,185.0) skewX(12) scale(0.78,0.83)" font-size="11" fill="#3aa860" stroke="#3aa860" stroke-width="0.9">O</text>
<text transform="translate(234.0,199.0) skewX(-22) scale(0.78,0.82)" font-size="11" fill="#fff" stroke="#fff" stroke-width="3.5">O</text><text transform="translate(234.0,199.0) skewX(-22) scale(0.78,0.82)" font-size="11" fill="#3aa860" stroke="#3aa860" stroke-width="0.9">O</text>
<text transform="translate(242.0,207.0) skewX(6) scale(0.78,0.95)" font-size="11" fill="#fff" stroke="#fff" stroke-width="3.5">O</text><text transform="translate(242.0,207.0) skewX(6) scale(0.78,0.95)" font-size="11" fill="#3aa860" stroke="#3aa860" stroke-width="0.9">O</text>
<text transform="translate(150.0,192.0) skewX(-14) scale(0.78,0.86)" font-size="11" fill="#fff" stroke="#fff" stroke-width="3.5">P</text><text transform="translate(150.0,192.0) skewX(-14) scale(0.78,0.86)" font-size="11" fill="#2e9c8c" stroke="#2e9c8c" stroke-width="0.9">P</text>
<text transform="translate(167.0,183.0) skewX(-22) scale(0.78,1.00)" font-size="11" fill="#fff" stroke="#fff" stroke-width="3.5">Q</text><text transform="translate(167.0,183.0) skewX(-22) scale(0.78,1.00)" font-size="11" fill="#2e9c8c" stroke="#2e9c8c" stroke-width="0.9">Q</text>
<text transform="translate(180.0,198.0) skewX(6) scale(0.78,0.86)" font-size="11" fill="#fff" stroke="#fff" stroke-width="3.5">O</text><text transform="translate(180.0,198.0) skewX(6) scale(0.78,0.86)" font-size="11" fill="#3aa860" stroke="#3aa860" stroke-width="0.9">O</text>
<text transform="translate(163.0,216.0) skewX(12) scale(0.78,0.99)" font-size="11" fill="#fff" stroke="#fff" stroke-width="3.5">O</text><text transform="translate(163.0,216.0) skewX(12) scale(0.78,0.99)" font-size="11" fill="#3aa860" stroke="#3aa860" stroke-width="0.9">O</text>
<text transform="translate(226.0,171.0) skewX(6) scale(0.78,0.82)" font-size="11" fill="#fff" stroke="#fff" stroke-width="3.5">P</text><text transform="translate(226.0,171.0) skewX(6) scale(0.78,0.82)" font-size="11" fill="#2e9c8c" stroke="#2e9c8c" stroke-width="0.9">P</text>
<text transform="translate(136.0,206.0) skewX(12) scale(0.78,0.94)" font-size="10" fill="#fff" stroke="#fff" stroke-width="2.8">L</text><text transform="translate(136.0,206.0) skewX(12) scale(0.78,0.94)" font-size="10" fill="#7ec81e" stroke="#7ec81e" stroke-width="0.9">L</text>
<text transform="translate(145.0,216.0) skewX(-14) scale(0.78,0.93)" font-size="10" fill="#fff" stroke="#fff" stroke-width="2.8">M</text><text transform="translate(145.0,216.0) skewX(-14) scale(0.78,0.93)" font-size="10" fill="#7ec81e" stroke="#7ec81e" stroke-width="0.9">M</text>
<text transform="translate(151.0,220.0) skewX(-14) scale(0.78,0.92)" font-size="10" fill="#fff" stroke="#fff" stroke-width="2.8">M</text><text transform="translate(151.0,220.0) skewX(-14) scale(0.78,0.92)" font-size="10" fill="#7ec81e" stroke="#7ec81e" stroke-width="0.9">M</text>
<text transform="translate(136.0,217.0) skewX(12) scale(0.78,0.97)" font-size="10" fill="#fff" stroke="#fff" stroke-width="2.8">L</text><text transform="translate(136.0,217.0) skewX(12) scale(0.78,0.97)" font-size="10" fill="#7ec81e" stroke="#7ec81e" stroke-width="0.9">L</text>
<text transform="translate(133.0,227.0) skewX(6) scale(0.78,0.84)" font-size="10" fill="#fff" stroke="#fff" stroke-width="2.8">L</text><text transform="translate(133.0,227.0) skewX(6) scale(0.78,0.84)" font-size="10" fill="#7ec81e" stroke="#7ec81e" stroke-width="0.9">L</text>
<text transform="translate(135.0,248.0) skewX(-14) scale(0.78,0.81)" font-size="10" fill="#fff" stroke="#fff" stroke-width="2.8">L</text><text transform="translate(135.0,248.0) skewX(-14) scale(0.78,0.81)" font-size="10" fill="#7ec81e" stroke="#7ec81e" stroke-width="0.9">L</text>
<text transform="translate(141.0,265.0) skewX(12) scale(0.78,0.83)" font-size="10" fill="#fff" stroke="#fff" stroke-width="2.8">O</text><text transform="translate(141.0,265.0) skewX(12) scale(0.78,0.83)" font-size="10" fill="#3fae2a" stroke="#3fae2a" stroke-width="0.9">O</text>
<text transform="translate(145.0,281.0) skewX(-6) scale(0.78,0.82)" font-size="10" fill="#fff" stroke="#fff" stroke-width="2.8">N</text><text transform="translate(145.0,281.0) skewX(-6) scale(0.78,0.82)" font-size="10" fill="#3fae2a" stroke="#3fae2a" stroke-width="0.9">N</text>
<text transform="translate(161.0,265.0) skewX(-14) scale(0.78,0.99)" font-size="10" fill="#fff" stroke="#fff" stroke-width="2.8">K</text><text transform="translate(161.0,265.0) skewX(-14) scale(0.78,0.99)" font-size="10" fill="#7ec81e" stroke="#7ec81e" stroke-width="0.9">K</text>
<text transform="translate(165.0,267.0) skewX(-14) scale(0.78,0.81)" font-size="10" fill="#fff" stroke="#fff" stroke-width="2.8">K</text><text transform="translate(165.0,267.0) skewX(-14) scale(0.78,0.81)" font-size="10" fill="#7ec81e" stroke="#7ec81e" stroke-width="0.9">K</text>
<text transform="translate(150.0,295.0) skewX(12) scale(0.78,0.97)" font-size="10" fill="#fff" stroke="#fff" stroke-width="2.8">L</text><text transform="translate(150.0,295.0) skewX(12) scale(0.78,0.97)" font-size="10" fill="#7ec81e" stroke="#7ec81e" stroke-width="0.9">L</text>
<text transform="translate(156.0,297.0) skewX(-22) scale(0.78,0.93)" font-size="10" fill="#fff" stroke="#fff" stroke-width="2.8">M</text><text transform="translate(156.0,297.0) skewX(-22) scale(0.78,0.93)" font-size="10" fill="#7ec81e" stroke="#7ec81e" stroke-width="0.9">M</text>
<text transform="translate(152.0,303.0) skewX(-6) scale(0.78,0.82)" font-size="10" fill="#fff" stroke="#fff" stroke-width="2.8">L</text><text transform="translate(152.0,303.0) skewX(-6) scale(0.78,0.82)" font-size="10" fill="#7ec81e" stroke="#7ec81e" stroke-width="0.9">L</text>
<text transform="translate(158.0,305.0) skewX(12) scale(0.78,0.89)" font-size="10" fill="#fff" stroke="#fff" stroke-width="2.8">M</text><text transform="translate(158.0,305.0) skewX(12) scale(0.78,0.89)" font-size="10" fill="#7ec81e" stroke="#7ec81e" stroke-width="0.9">M</text>
<text transform="translate(153.7,344.0) skewX(-6) scale(0.78,0.93)" font-size="10" fill="#fff" stroke="#fff" stroke-width="2.8">K</text><text transform="translate(153.7,344.0) skewX(-6) scale(0.78,0.93)" font-size="10" fill="#7ec81e" stroke="#7ec81e" stroke-width="0.9">K</text>
<text transform="translate(188.5,349.4) skewX(-6) scale(0.78,0.92)" font-size="10" fill="#fff" stroke="#fff" stroke-width="2.8">M</text><text transform="translate(188.5,349.4) skewX(-6) scale(0.78,0.92)" font-size="10" fill="#7ec81e" stroke="#7ec81e" stroke-width="0.9">M</text>
<text transform="translate(203.2,347.3) skewX(6) scale(0.78,0.88)" font-size="10" fill="#fff" stroke="#fff" stroke-width="2.8">L</text><text transform="translate(203.2,347.3) skewX(6) scale(0.78,0.88)" font-size="10" fill="#7ec81e" stroke="#7ec81e" stroke-width="0.9">L</text>
<text transform="translate(169.5,371.5) skewX(-6) scale(0.78,0.89)" font-size="10" fill="#fff" stroke="#fff" stroke-width="2.8">M</text><text transform="translate(169.5,371.5) skewX(-6) scale(0.78,0.89)" font-size="10" fill="#7ec81e" stroke="#7ec81e" stroke-width="0.9">M</text>
<text transform="translate(192.7,373.6) skewX(6) scale(0.78,0.84)" font-size="10" fill="#fff" stroke="#fff" stroke-width="2.8">L</text><text transform="translate(192.7,373.6) skewX(6) scale(0.78,0.84)" font-size="10" fill="#7ec81e" stroke="#7ec81e" stroke-width="0.9">L</text>
<text transform="translate(165.4,410.0) skewX(-22) scale(0.78,0.92)" font-size="10" fill="#fff" stroke="#fff" stroke-width="2.8">K</text><text transform="translate(165.4,410.0) skewX(-22) scale(0.78,0.92)" font-size="10" fill="#7ec81e" stroke="#7ec81e" stroke-width="0.9">K</text>
<text transform="translate(193.8,324.0) skewX(6) scale(0.78,0.89)" font-size="10" fill="#fff" stroke="#fff" stroke-width="2.8">K</text><text transform="translate(193.8,324.0) skewX(6) scale(0.78,0.89)" font-size="10" fill="#7ec81e" stroke="#7ec81e" stroke-width="0.9">K</text>
<text transform="translate(146.0,253.0) skewX(6) scale(0.78,0.95)" font-size="10" fill="#fff" stroke="#fff" stroke-width="2.8">O</text><text transform="translate(146.0,253.0) skewX(6) scale(0.78,0.95)" font-size="10" fill="#3fae2a" stroke="#3fae2a" stroke-width="0.9">O</text>
<text transform="translate(205.0,202.0) skewX(6) scale(0.78,0.97)" font-size="10" fill="#fff" stroke="#fff" stroke-width="2.8">N</text><text transform="translate(205.0,202.0) skewX(6) scale(0.78,0.97)" font-size="10" fill="#3fae2a" stroke="#3fae2a" stroke-width="0.9">N</text>
<text transform="translate(216.0,199.0) skewX(6) scale(0.78,0.88)" font-size="10" fill="#fff" stroke="#fff" stroke-width="2.8">N</text><text transform="translate(216.0,199.0) skewX(6) scale(0.78,0.88)" font-size="10" fill="#3fae2a" stroke="#3fae2a" stroke-width="0.9">N</text>
<text transform="translate(222.0,202.0) skewX(-22) scale(0.78,0.83)" font-size="10" fill="#fff" stroke="#fff" stroke-width="2.8">N</text><text transform="translate(222.0,202.0) skewX(-22) scale(0.78,0.83)" font-size="10" fill="#3fae2a" stroke="#3fae2a" stroke-width="0.9">N</text>
<text transform="translate(209.0,211.0) skewX(6) scale(0.78,0.87)" font-size="10" fill="#fff" stroke="#fff" stroke-width="2.8">M</text><text transform="translate(209.0,211.0) skewX(6) scale(0.78,0.87)" font-size="10" fill="#3fae2a" stroke="#3fae2a" stroke-width="0.9">M</text>
<text transform="translate(223.0,212.0) skewX(6) scale(0.78,0.90)" font-size="10" fill="#fff" stroke="#fff" stroke-width="2.8">N</text><text transform="translate(223.0,212.0) skewX(6) scale(0.78,0.90)" font-size="10" fill="#3fae2a" stroke="#3fae2a" stroke-width="0.9">N</text>
<text transform="translate(218.0,220.0) skewX(-22) scale(0.78,0.81)" font-size="10" fill="#fff" stroke="#fff" stroke-width="2.8">M</text><text transform="translate(218.0,220.0) skewX(-22) scale(0.78,0.81)" font-size="10" fill="#3fae2a" stroke="#3fae2a" stroke-width="0.9">M</text>
<text transform="translate(235.0,220.0) skewX(-14) scale(0.78,0.82)" font-size="10" fill="#fff" stroke="#fff" stroke-width="2.8">N</text><text transform="translate(235.0,220.0) skewX(-14) scale(0.78,0.82)" font-size="10" fill="#3fae2a" stroke="#3fae2a" stroke-width="0.9">N</text>
<text transform="translate(230.0,225.0) skewX(-6) scale(0.78,0.96)" font-size="10" fill="#fff" stroke="#fff" stroke-width="2.8">M</text><text transform="translate(230.0,225.0) skewX(-6) scale(0.78,0.96)" font-size="10" fill="#3fae2a" stroke="#3fae2a" stroke-width="0.9">M</text>
<text transform="translate(199.0,226.0) skewX(12) scale(0.78,0.82)" font-size="10" fill="#fff" stroke="#fff" stroke-width="2.8">L</text><text transform="translate(199.0,226.0) skewX(12) scale(0.78,0.82)" font-size="10" fill="#7ec81e" stroke="#7ec81e" stroke-width="0.9">L</text>
<text transform="translate(221.0,231.0) skewX(12) scale(0.78,0.98)" font-size="10" fill="#fff" stroke="#fff" stroke-width="2.8">L</text><text transform="translate(221.0,231.0) skewX(12) scale(0.78,0.98)" font-size="10" fill="#7ec81e" stroke="#7ec81e" stroke-width="0.9">L</text>
<text transform="translate(246.0,230.0) skewX(-14) scale(0.78,0.81)" font-size="10" fill="#fff" stroke="#fff" stroke-width="2.8">M</text><text transform="translate(246.0,230.0) skewX(-14) scale(0.78,0.81)" font-size="10" fill="#3fae2a" stroke="#3fae2a" stroke-width="0.9">M</text>
<text transform="translate(232.0,239.0) skewX(-22) scale(0.78,1.00)" font-size="10" fill="#fff" stroke="#fff" stroke-width="2.8">L</text><text transform="translate(232.0,239.0) skewX(-22) scale(0.78,1.00)" font-size="10" fill="#7ec81e" stroke="#7ec81e" stroke-width="0.9">L</text>
<text transform="translate(240.0,243.0) skewX(-22) scale(0.78,0.84)" font-size="10" fill="#fff" stroke="#fff" stroke-width="2.8">N</text><text transform="translate(240.0,243.0) skewX(-22) scale(0.78,0.84)" font-size="10" fill="#3fae2a" stroke="#3fae2a" stroke-width="0.9">N</text>
<text transform="translate(245.0,235.0) skewX(6) scale(0.78,0.86)" font-size="10" fill="#fff" stroke="#fff" stroke-width="2.8">M</text><text transform="translate(245.0,235.0) skewX(6) scale(0.78,0.86)" font-size="10" fill="#3fae2a" stroke="#3fae2a" stroke-width="0.9">M</text>
<text transform="translate(178.0,250.0) skewX(-14) scale(0.78,0.94)" font-size="10" fill="#fff" stroke="#fff" stroke-width="2.8">K</text><text transform="translate(178.0,250.0) skewX(-14) scale(0.78,0.94)" font-size="10" fill="#d4e61e" stroke="#d4e61e" stroke-width="0.9">K</text>
<text transform="translate(194.0,246.0) skewX(-14) scale(0.78,0.81)" font-size="10" fill="#fff" stroke="#fff" stroke-width="2.8">K</text><text transform="translate(194.0,246.0) skewX(-14) scale(0.78,0.81)" font-size="10" fill="#d4e61e" stroke="#d4e61e" stroke-width="0.9">K</text>
<text transform="translate(236.0,247.0) skewX(-6) scale(0.78,0.92)" font-size="10" fill="#fff" stroke="#fff" stroke-width="2.8">K</text><text transform="translate(236.0,247.0) skewX(-6) scale(0.78,0.92)" font-size="10" fill="#d4e61e" stroke="#d4e61e" stroke-width="0.9">K</text>
<text transform="translate(199.0,323.0) skewX(-6) scale(0.78,0.83)" font-size="10" fill="#fff" stroke="#fff" stroke-width="2.8">K</text><text transform="translate(199.0,323.0) skewX(-6) scale(0.78,0.83)" font-size="10" fill="#d4e61e" stroke="#d4e61e" stroke-width="0.9">K</text>
<text transform="translate(208.0,329.0) skewX(12) scale(0.78,0.85)" font-size="10" fill="#fff" stroke="#fff" stroke-width="2.8">K</text><text transform="translate(208.0,329.0) skewX(12) scale(0.78,0.85)" font-size="10" fill="#d4e61e" stroke="#d4e61e" stroke-width="0.9">K</text>
<text transform="translate(215.0,321.0) skewX(6) scale(0.78,0.83)" font-size="10" fill="#fff" stroke="#fff" stroke-width="2.8">K</text><text transform="translate(215.0,321.0) skewX(6) scale(0.78,0.83)" font-size="10" fill="#d4e61e" stroke="#d4e61e" stroke-width="0.9">K</text>
<text transform="translate(300.0,181.0) skewX(12) scale(0.78,0.99)" font-size="10" fill="#fff" stroke="#fff" stroke-width="2.8">K</text><text transform="translate(300.0,181.0) skewX(12) scale(0.78,0.99)" font-size="10" fill="#d4e61e" stroke="#d4e61e" stroke-width="0.9">K</text>
<text transform="translate(300.0,196.0) skewX(6) scale(0.78,0.84)" font-size="10" fill="#fff" stroke="#fff" stroke-width="2.8">K</text><text transform="translate(300.0,196.0) skewX(6) scale(0.78,0.84)" font-size="10" fill="#d4e61e" stroke="#d4e61e" stroke-width="0.9">K</text>
<text transform="translate(301.0,221.0) skewX(-6) scale(0.78,0.92)" font-size="10" fill="#fff" stroke="#fff" stroke-width="2.8">K</text><text transform="translate(301.0,221.0) skewX(-6) scale(0.78,0.92)" font-size="10" fill="#d4e61e" stroke="#d4e61e" stroke-width="0.9">K</text>
<text transform="translate(312.0,235.0) skewX(-14) scale(0.78,0.86)" font-size="10" fill="#fff" stroke="#fff" stroke-width="2.8">K</text><text transform="translate(312.0,235.0) skewX(-14) scale(0.78,0.86)" font-size="10" fill="#d4e61e" stroke="#d4e61e" stroke-width="0.9">K</text>
<text transform="translate(318.0,243.0) skewX(-22) scale(0.78,0.84)" font-size="10" fill="#fff" stroke="#fff" stroke-width="2.8">K</text><text transform="translate(318.0,243.0) skewX(-22) scale(0.78,0.84)" font-size="10" fill="#d4e61e" stroke="#d4e61e" stroke-width="0.9">K</text>
<text transform="translate(326.0,253.0) skewX(6) scale(0.78,0.83)" font-size="10" fill="#fff" stroke="#fff" stroke-width="2.8">K</text><text transform="translate(326.0,253.0) skewX(6) scale(0.78,0.83)" font-size="10" fill="#d4e61e" stroke="#d4e61e" stroke-width="0.9">K</text>
<text transform="translate(190.0,304.0) skewX(-6) scale(0.78,0.94)" font-size="10" fill="#fff" stroke="#fff" stroke-width="2.8">K</text><text transform="translate(190.0,304.0) skewX(-6) scale(0.78,0.94)" font-size="10" fill="#d4e61e" stroke="#d4e61e" stroke-width="0.9">K</text>
<text transform="translate(246.0,335.0) skewX(6) scale(0.78,0.83)" font-size="10" fill="#fff" stroke="#fff" stroke-width="2.8">K</text><text transform="translate(246.0,335.0) skewX(6) scale(0.78,0.83)" font-size="10" fill="#d4e61e" stroke="#d4e61e" stroke-width="0.9">K</text>
<text transform="translate(252.0,343.0) skewX(-6) scale(0.78,0.82)" font-size="10" fill="#fff" stroke="#fff" stroke-width="2.8">K</text><text transform="translate(252.0,343.0) skewX(-6) scale(0.78,0.82)" font-size="10" fill="#d4e61e" stroke="#d4e61e" stroke-width="0.9">K</text>
<text transform="translate(236.0,325.0) skewX(12) scale(0.78,0.81)" font-size="10" fill="#fff" stroke="#fff" stroke-width="2.8">K</text><text transform="translate(236.0,325.0) skewX(12) scale(0.78,0.81)" font-size="10" fill="#d4e61e" stroke="#d4e61e" stroke-width="0.9">K</text>
<text transform="translate(276.0,148.0) skewX(-6) scale(0.78,0.99)" font-size="10" fill="#fff" stroke="#fff" stroke-width="2.8">I</text><text transform="translate(276.0,148.0) skewX(-6) scale(0.78,0.99)" font-size="10" fill="#7ec81e" stroke="#7ec81e" stroke-width="0.9">I</text>
<text transform="translate(280.0,153.0) skewX(6) scale(0.78,0.91)" font-size="10" fill="#fff" stroke="#fff" stroke-width="2.8">I</text><text transform="translate(280.0,153.0) skewX(6) scale(0.78,0.91)" font-size="10" fill="#7ec81e" stroke="#7ec81e" stroke-width="0.9">I</text>
<text transform="translate(316.0,217.0) skewX(12) scale(0.78,0.94)" font-size="10" fill="#fff" stroke="#fff" stroke-width="2.8">I</text><text transform="translate(316.0,217.0) skewX(12) scale(0.78,0.94)" font-size="10" fill="#7ec81e" stroke="#7ec81e" stroke-width="0.9">I</text>
<text transform="translate(324.0,231.0) skewX(-22) scale(0.78,0.85)" font-size="10" fill="#fff" stroke="#fff" stroke-width="2.8">I</text><text transform="translate(324.0,231.0) skewX(-22) scale(0.78,0.85)" font-size="10" fill="#7ec81e" stroke="#7ec81e" stroke-width="0.9">I</text>
<text transform="translate(331.0,243.0) skewX(12) scale(0.78,0.93)" font-size="10" fill="#fff" stroke="#fff" stroke-width="2.8">I</text><text transform="translate(331.0,243.0) skewX(12) scale(0.78,0.93)" font-size="10" fill="#7ec81e" stroke="#7ec81e" stroke-width="0.9">I</text>
<text transform="translate(306.0,203.0) skewX(6) scale(0.78,0.95)" font-size="10" fill="#fff" stroke="#fff" stroke-width="2.8">I</text><text transform="translate(306.0,203.0) skewX(6) scale(0.78,0.95)" font-size="10" fill="#7ec81e" stroke="#7ec81e" stroke-width="0.9">I</text>
<text transform="translate(252.0,143.0) skewX(-6) scale(0.78,0.85)" font-size="10" fill="#fff" stroke="#fff" stroke-width="2.8">I</text><text transform="translate(252.0,143.0) skewX(-6) scale(0.78,0.85)" font-size="10" fill="#ffe81e" stroke="#ffe81e" stroke-width="0.9">I</text>
<text transform="translate(261.0,140.0) skewX(-6) scale(0.78,0.92)" font-size="10" fill="#fff" stroke="#fff" stroke-width="2.8">H</text><text transform="translate(261.0,140.0) skewX(-6) scale(0.78,0.92)" font-size="10" fill="#ffe81e" stroke="#ffe81e" stroke-width="0.9">H</text>
<text transform="translate(266.0,169.0) skewX(-6) scale(0.78,0.87)" font-size="10" fill="#fff" stroke="#fff" stroke-width="2.8">H</text><text transform="translate(266.0,169.0) skewX(-6) scale(0.78,0.87)" font-size="10" fill="#ffe81e" stroke="#ffe81e" stroke-width="0.9">H</text>
<text transform="translate(279.0,172.0) skewX(-22) scale(0.78,0.89)" font-size="10" fill="#fff" stroke="#fff" stroke-width="2.8">I</text><text transform="translate(279.0,172.0) skewX(-22) scale(0.78,0.89)" font-size="10" fill="#ffe81e" stroke="#ffe81e" stroke-width="0.9">I</text>
<text transform="translate(240.0,179.0) skewX(-14) scale(0.78,0.92)" font-size="10" fill="#fff" stroke="#fff" stroke-width="2.8">J</text><text transform="translate(240.0,179.0) skewX(-14) scale(0.78,0.92)" font-size="10" fill="#ffe81e" stroke="#ffe81e" stroke-width="0.9">J</text>
<text transform="translate(246.0,179.0) skewX(-22) scale(0.78,0.86)" font-size="10" fill="#fff" stroke="#fff" stroke-width="2.8">I</text><text transform="translate(246.0,179.0) skewX(-22) scale(0.78,0.86)" font-size="10" fill="#ffe81e" stroke="#ffe81e" stroke-width="0.9">I</text>
<text transform="translate(270.0,198.0) skewX(12) scale(0.78,0.85)" font-size="10" fill="#fff" stroke="#fff" stroke-width="2.8">H</text><text transform="translate(270.0,198.0) skewX(12) scale(0.78,0.85)" font-size="10" fill="#ffe81e" stroke="#ffe81e" stroke-width="0.9">H</text>
<text transform="translate(266.0,211.0) skewX(12) scale(0.78,0.99)" font-size="10" fill="#fff" stroke="#fff" stroke-width="2.8">H</text><text transform="translate(266.0,211.0) skewX(12) scale(0.78,0.99)" font-size="10" fill="#ffb61e" stroke="#ffb61e" stroke-width="0.9">H</text>
<text transform="translate(295.0,206.0) skewX(-6) scale(0.78,0.95)" font-size="10" fill="#fff" stroke="#fff" stroke-width="2.8">H</text><text transform="translate(295.0,206.0) skewX(-6) scale(0.78,0.95)" font-size="10" fill="#ffe81e" stroke="#ffe81e" stroke-width="0.9">H</text>
<text transform="translate(287.0,227.0) skewX(-22) scale(0.78,0.84)" font-size="10" fill="#fff" stroke="#fff" stroke-width="2.8">H</text><text transform="translate(287.0,227.0) skewX(-22) scale(0.78,0.84)" font-size="10" fill="#ffe81e" stroke="#ffe81e" stroke-width="0.9">H</text>
<text transform="translate(257.0,231.0) skewX(-6) scale(0.78,0.92)" font-size="10" fill="#fff" stroke="#fff" stroke-width="2.8">H</text><text transform="translate(257.0,231.0) skewX(-6) scale(0.78,0.92)" font-size="10" fill="#ffe81e" stroke="#ffe81e" stroke-width="0.9">H</text>
<text transform="translate(262.0,249.0) skewX(6) scale(0.78,0.88)" font-size="10" fill="#fff" stroke="#fff" stroke-width="2.8">H</text><text transform="translate(262.0,249.0) skewX(6) scale(0.78,0.88)" font-size="10" fill="#ffe81e" stroke="#ffe81e" stroke-width="0.9">H</text>
<text transform="translate(290.0,243.0) skewX(-6) scale(0.78,0.98)" font-size="10" fill="#fff" stroke="#fff" stroke-width="2.8">J</text><text transform="translate(290.0,243.0) skewX(-6) scale(0.78,0.98)" font-size="10" fill="#ffe81e" stroke="#ffe81e" stroke-width="0.9">J</text>
<text transform="translate(312.0,265.0) skewX(-14) scale(0.78,0.90)" font-size="10" fill="#fff" stroke="#fff" stroke-width="2.8">I</text><text transform="translate(312.0,265.0) skewX(-14) scale(0.78,0.90)" font-size="10" fill="#ffb61e" stroke="#ffb61e" stroke-width="0.9">I</text>
<text transform="translate(300.0,265.0) skewX(12) scale(0.78,0.93)" font-size="10" fill="#fff" stroke="#fff" stroke-width="2.8">H</text><text transform="translate(300.0,265.0) skewX(12) scale(0.78,0.93)" font-size="10" fill="#ffe81e" stroke="#ffe81e" stroke-width="0.9">H</text>
<text transform="translate(270.0,265.0) skewX(-22) scale(0.78,0.81)" font-size="10" fill="#fff" stroke="#fff" stroke-width="2.8">I</text><text transform="translate(270.0,265.0) skewX(-22) scale(0.78,0.81)" font-size="10" fill="#ffe81e" stroke="#ffe81e" stroke-width="0.9">I</text>
<text transform="translate(252.0,261.0) skewX(12) scale(0.78,0.87)" font-size="10" fill="#fff" stroke="#fff" stroke-width="2.8">I</text><text transform="translate(252.0,261.0) skewX(12) scale(0.78,0.87)" font-size="10" fill="#ffb61e" stroke="#ffb61e" stroke-width="0.9">I</text>
<text transform="translate(262.0,273.0) skewX(-22) scale(0.78,0.90)" font-size="10" fill="#fff" stroke="#fff" stroke-width="2.8">I</text><text transform="translate(262.0,273.0) skewX(-22) scale(0.78,0.90)" font-size="10" fill="#ffe81e" stroke="#ffe81e" stroke-width="0.9">I</text>
<text transform="translate(246.0,273.0) skewX(12) scale(0.78,0.84)" font-size="10" fill="#fff" stroke="#fff" stroke-width="2.8">I</text><text transform="translate(246.0,273.0) skewX(12) scale(0.78,0.84)" font-size="10" fill="#ffb61e" stroke="#ffb61e" stroke-width="0.9">I</text>
<text transform="translate(284.0,281.0) skewX(12) scale(0.78,0.86)" font-size="10" fill="#fff" stroke="#fff" stroke-width="2.8">H</text><text transform="translate(284.0,281.0) skewX(12) scale(0.78,0.86)" font-size="10" fill="#ffb61e" stroke="#ffb61e" stroke-width="0.9">H</text>
<text transform="translate(306.0,293.0) skewX(-14) scale(0.78,0.84)" font-size="10" fill="#fff" stroke="#fff" stroke-width="2.8">I</text><text transform="translate(306.0,293.0) skewX(-14) scale(0.78,0.84)" font-size="10" fill="#ffe81e" stroke="#ffe81e" stroke-width="0.9">I</text>
<text transform="translate(328.0,299.0) skewX(12) scale(0.78,0.97)" font-size="10" fill="#fff" stroke="#fff" stroke-width="2.8">H</text><text transform="translate(328.0,299.0) skewX(12) scale(0.78,0.97)" font-size="10" fill="#ffe81e" stroke="#ffe81e" stroke-width="0.9">H</text>
<text transform="translate(342.0,303.0) skewX(-14) scale(0.78,0.83)" font-size="10" fill="#fff" stroke="#fff" stroke-width="2.8">H</text><text transform="translate(342.0,303.0) skewX(-14) scale(0.78,0.83)" font-size="10" fill="#ffe81e" stroke="#ffe81e" stroke-width="0.9">H</text>
<text transform="translate(292.0,303.0) skewX(-14) scale(0.78,0.94)" font-size="10" fill="#fff" stroke="#fff" stroke-width="2.8">J</text><text transform="translate(292.0,303.0) skewX(-14) scale(0.78,0.94)" font-size="10" fill="#ffe81e" stroke="#ffe81e" stroke-width="0.9">J</text>
<text transform="translate(276.0,303.0) skewX(6) scale(0.78,0.82)" font-size="10" fill="#fff" stroke="#fff" stroke-width="2.8">J</text><text transform="translate(276.0,303.0) skewX(6) scale(0.78,0.82)" font-size="10" fill="#ffe81e" stroke="#ffe81e" stroke-width="0.9">J</text>
<text transform="translate(268.0,313.0) skewX(-14) scale(0.78,0.97)" font-size="10" fill="#fff" stroke="#fff" stroke-width="2.8">I</text><text transform="translate(268.0,313.0) skewX(-14) scale(0.78,0.97)" font-size="10" fill="#ffe81e" stroke="#ffe81e" stroke-width="0.9">I</text>
<text transform="translate(260.0,299.0) skewX(-6) scale(0.78,0.88)" font-size="10" fill="#fff" stroke="#fff" stroke-width="2.8">H</text><text transform="translate(260.0,299.0) skewX(-6) scale(0.78,0.88)" font-size="10" fill="#ffe81e" stroke="#ffe81e" stroke-width="0.9">H</text>
<text transform="translate(300.0,321.0) skewX(-6) scale(0.78,0.99)" font-size="10" fill="#fff" stroke="#fff" stroke-width="2.8">H</text><text transform="translate(300.0,321.0) skewX(-6) scale(0.78,0.99)" font-size="10" fill="#ffe81e" stroke="#ffe81e" stroke-width="0.9">H</text>
<text transform="translate(318.0,333.0) skewX(-22) scale(0.78,0.93)" font-size="10" fill="#fff" stroke="#fff" stroke-width="2.8">H</text><text transform="translate(318.0,333.0) skewX(-22) scale(0.78,0.93)" font-size="10" fill="#ffe81e" stroke="#ffe81e" stroke-width="0.9">H</text>
<text transform="translate(336.0,321.0) skewX(12) scale(0.78,0.98)" font-size="10" fill="#fff" stroke="#fff" stroke-width="2.8">I</text><text transform="translate(336.0,321.0) skewX(12) scale(0.78,0.98)" font-size="10" fill="#ffb61e" stroke="#ffb61e" stroke-width="0.9">I</text>
<text transform="translate(352.0,325.0) skewX(12) scale(0.78,0.93)" font-size="10" fill="#fff" stroke="#fff" stroke-width="2.8">J</text><text transform="translate(352.0,325.0) skewX(12) scale(0.78,0.93)" font-size="10" fill="#ffe81e" stroke="#ffe81e" stroke-width="0.9">J</text>
<text transform="translate(366.0,333.0) skewX(6) scale(0.78,0.92)" font-size="10" fill="#fff" stroke="#fff" stroke-width="2.8">J</text><text transform="translate(366.0,333.0) skewX(6) scale(0.78,0.92)" font-size="10" fill="#ffe81e" stroke="#ffe81e" stroke-width="0.9">J</text>
<text transform="translate(344.0,343.0) skewX(12) scale(0.78,0.95)" font-size="10" fill="#fff" stroke="#fff" stroke-width="2.8">H</text><text transform="translate(344.0,343.0) skewX(12) scale(0.78,0.95)" font-size="10" fill="#ffe81e" stroke="#ffe81e" stroke-width="0.9">H</text>
<text transform="translate(318.0,347.0) skewX(-14) scale(0.78,0.83)" font-size="10" fill="#fff" stroke="#fff" stroke-width="2.8">I</text><text transform="translate(318.0,347.0) skewX(-14) scale(0.78,0.83)" font-size="10" fill="#ffe81e" stroke="#ffe81e" stroke-width="0.9">I</text>
<text transform="translate(356.0,355.0) skewX(-22) scale(0.78,0.81)" font-size="10" fill="#fff" stroke="#fff" stroke-width="2.8">H</text><text transform="translate(356.0,355.0) skewX(-22) scale(0.78,0.81)" font-size="10" fill="#ffe81e" stroke="#ffe81e" stroke-width="0.9">H</text>
<text transform="translate(378.0,349.0) skewX(12) scale(0.78,0.81)" font-size="10" fill="#fff" stroke="#fff" stroke-width="2.8">I</text><text transform="translate(378.0,349.0) skewX(12) scale(0.78,0.81)" font-size="10" fill="#ffe81e" stroke="#ffe81e" stroke-width="0.9">I</text>
<text transform="translate(392.0,355.0) skewX(-14) scale(0.78,0.85)" font-size="10" fill="#fff" stroke="#fff" stroke-width="2.8">H</text><text transform="translate(392.0,355.0) skewX(-14) scale(0.78,0.85)" font-size="10" fill="#ffe81e" stroke="#ffe81e" stroke-width="0.9">H</text>
<text transform="translate(404.0,363.0) skewX(-22) scale(0.78,0.98)" font-size="10" fill="#fff" stroke="#fff" stroke-width="2.8">H</text><text transform="translate(404.0,363.0) skewX(-22) scale(0.78,0.98)" font-size="10" fill="#ffe81e" stroke="#ffe81e" stroke-width="0.9">H</text>
<text transform="translate(398.0,371.0) skewX(-22) scale(0.78,0.80)" font-size="10" fill="#fff" stroke="#fff" stroke-width="2.8">I</text><text transform="translate(398.0,371.0) skewX(-22) scale(0.78,0.80)" font-size="10" fill="#ffe81e" stroke="#ffe81e" stroke-width="0.9">I</text>
<text transform="translate(410.0,375.0) skewX(12) scale(0.78,0.93)" font-size="10" fill="#fff" stroke="#fff" stroke-width="2.8">I</text><text transform="translate(410.0,375.0) skewX(12) scale(0.78,0.93)" font-size="10" fill="#ffe81e" stroke="#ffe81e" stroke-width="0.9">I</text>
<text transform="translate(416.0,381.0) skewX(-14) scale(0.78,0.83)" font-size="10" fill="#fff" stroke="#fff" stroke-width="2.8">H</text><text transform="translate(416.0,381.0) skewX(-14) scale(0.78,0.83)" font-size="10" fill="#ffe81e" stroke="#ffe81e" stroke-width="0.9">H</text>
<text transform="translate(404.0,383.0) skewX(-14) scale(0.78,0.90)" font-size="10" fill="#fff" stroke="#fff" stroke-width="2.8">H</text><text transform="translate(404.0,383.0) skewX(-14) scale(0.78,0.90)" font-size="10" fill="#ffe81e" stroke="#ffe81e" stroke-width="0.9">H</text>
<text transform="translate(374.0,375.0) skewX(12) scale(0.78,0.93)" font-size="10" fill="#fff" stroke="#fff" stroke-width="2.8">H</text><text transform="translate(374.0,375.0) skewX(12) scale(0.78,0.93)" font-size="10" fill="#ffb61e" stroke="#ffb61e" stroke-width="0.9">H</text>
<text transform="translate(356.0,375.0) skewX(6) scale(0.78,0.96)" font-size="10" fill="#fff" stroke="#fff" stroke-width="2.8">J</text><text transform="translate(356.0,375.0) skewX(6) scale(0.78,0.96)" font-size="10" fill="#ffe81e" stroke="#ffe81e" stroke-width="0.9">J</text>
<text transform="translate(340.0,375.0) skewX(-14) scale(0.78,0.90)" font-size="10" fill="#fff" stroke="#fff" stroke-width="2.8">H</text><text transform="translate(340.0,375.0) skewX(-14) scale(0.78,0.90)" font-size="10" fill="#ffe81e" stroke="#ffe81e" stroke-width="0.9">H</text>
<text transform="translate(368.0,391.0) skewX(-22) scale(0.78,0.86)" font-size="10" fill="#fff" stroke="#fff" stroke-width="2.8">I</text><text transform="translate(368.0,391.0) skewX(-22) scale(0.78,0.86)" font-size="10" fill="#ffb61e" stroke="#ffb61e" stroke-width="0.9">I</text>
<text transform="translate(388.0,395.0) skewX(-22) scale(0.78,1.00)" font-size="10" fill="#fff" stroke="#fff" stroke-width="2.8">J</text><text transform="translate(388.0,395.0) skewX(-22) scale(0.78,1.00)" font-size="10" fill="#ffe81e" stroke="#ffe81e" stroke-width="0.9">J</text>
<text transform="translate(186.0,293.0) skewX(6) scale(0.78,0.94)" font-size="10" fill="#fff" stroke="#fff" stroke-width="2.8">I</text><text transform="translate(186.0,293.0) skewX(6) scale(0.78,0.94)" font-size="10" fill="#ffe81e" stroke="#ffe81e" stroke-width="0.9">I</text>
<text transform="translate(196.0,299.0) skewX(-22) scale(0.78,0.88)" font-size="10" fill="#fff" stroke="#fff" stroke-width="2.8">I</text><text transform="translate(196.0,299.0) skewX(-22) scale(0.78,0.88)" font-size="10" fill="#ffb61e" stroke="#ffb61e" stroke-width="0.9">I</text>
<text transform="translate(206.0,303.0) skewX(6) scale(0.78,0.95)" font-size="10" fill="#fff" stroke="#fff" stroke-width="2.8">H</text><text transform="translate(206.0,303.0) skewX(6) scale(0.78,0.95)" font-size="10" fill="#ffe81e" stroke="#ffe81e" stroke-width="0.9">H</text>
<text transform="translate(214.0,309.0) skewX(6) scale(0.78,0.82)" font-size="10" fill="#fff" stroke="#fff" stroke-width="2.8">J</text><text transform="translate(214.0,309.0) skewX(6) scale(0.78,0.82)" font-size="10" fill="#ffe81e" stroke="#ffe81e" stroke-width="0.9">J</text>
<text transform="translate(200.0,287.0) skewX(6) scale(0.78,0.84)" font-size="10" fill="#fff" stroke="#fff" stroke-width="2.8">I</text><text transform="translate(200.0,287.0) skewX(6) scale(0.78,0.84)" font-size="10" fill="#ffe81e" stroke="#ffe81e" stroke-width="0.9">I</text>
<text transform="translate(226.0,303.0) skewX(-22) scale(0.78,0.85)" font-size="10" fill="#fff" stroke="#fff" stroke-width="2.8">I</text><text transform="translate(226.0,303.0) skewX(-22) scale(0.78,0.85)" font-size="10" fill="#ffe81e" stroke="#ffe81e" stroke-width="0.9">I</text>
<text transform="translate(228.0,323.0) skewX(-22) scale(0.78,0.82)" font-size="10" fill="#fff" stroke="#fff" stroke-width="2.8">I</text><text transform="translate(228.0,323.0) skewX(-22) scale(0.78,0.82)" font-size="10" fill="#ffe81e" stroke="#ffe81e" stroke-width="0.9">I</text>
<text transform="translate(222.0,337.0) skewX(-6) scale(0.78,0.94)" font-size="10" fill="#fff" stroke="#fff" stroke-width="2.8">H</text><text transform="translate(222.0,337.0) skewX(-6) scale(0.78,0.94)" font-size="10" fill="#ffe81e" stroke="#ffe81e" stroke-width="0.9">H</text>
<text transform="translate(238.0,345.0) skewX(-6) scale(0.78,0.93)" font-size="10" fill="#fff" stroke="#fff" stroke-width="2.8">I</text><text transform="translate(238.0,345.0) skewX(-6) scale(0.78,0.93)" font-size="10" fill="#ffb61e" stroke="#ffb61e" stroke-width="0.9">I</text>
<text transform="translate(256.0,353.0) skewX(6) scale(0.78,0.94)" font-size="10" fill="#fff" stroke="#fff" stroke-width="2.8">I</text><text transform="translate(256.0,353.0) skewX(6) scale(0.78,0.94)" font-size="10" fill="#ffe81e" stroke="#ffe81e" stroke-width="0.9">I</text>
<text transform="translate(266.0,361.0) skewX(12) scale(0.78,0.99)" font-size="10" fill="#fff" stroke="#fff" stroke-width="2.8">H</text><text transform="translate(266.0,361.0) skewX(12) scale(0.78,0.99)" font-size="10" fill="#ffe81e" stroke="#ffe81e" stroke-width="0.9">H</text>
<text transform="translate(208.0,343.0) skewX(-6) scale(0.78,0.93)" font-size="10" fill="#fff" stroke="#fff" stroke-width="2.8">H</text><text transform="translate(208.0,343.0) skewX(-6) scale(0.78,0.93)" font-size="10" fill="#ffe81e" stroke="#ffe81e" stroke-width="0.9">H</text>
<text transform="translate(232.0,271.0) skewX(-14) scale(0.78,0.82)" font-size="10" fill="#fff" stroke="#fff" stroke-width="2.8">I</text><text transform="translate(232.0,271.0) skewX(-14) scale(0.78,0.82)" font-size="10" fill="#ffe81e" stroke="#ffe81e" stroke-width="0.9">I</text>
<text transform="translate(218.0,265.0) skewX(12) scale(0.78,0.80)" font-size="10" fill="#fff" stroke="#fff" stroke-width="2.8">H</text><text transform="translate(218.0,265.0) skewX(12) scale(0.78,0.80)" font-size="10" fill="#ffe81e" stroke="#ffe81e" stroke-width="0.9">H</text>
<text transform="translate(212.0,253.0) skewX(-6) scale(0.78,0.98)" font-size="10" fill="#fff" stroke="#fff" stroke-width="2.8">H</text><text transform="translate(212.0,253.0) skewX(-6) scale(0.78,0.98)" font-size="10" fill="#ffb61e" stroke="#ffb61e" stroke-width="0.9">H</text>
<text transform="translate(190.0,235.0) skewX(-14) scale(0.78,0.99)" font-size="10" fill="#fff" stroke="#fff" stroke-width="2.8">I</text><text transform="translate(190.0,235.0) skewX(-14) scale(0.78,0.99)" font-size="10" fill="#ffe81e" stroke="#ffe81e" stroke-width="0.9">I</text>
<text transform="translate(186.0,265.0) skewX(-6) scale(0.78,0.84)" font-size="10" fill="#fff" stroke="#fff" stroke-width="2.8">J</text><text transform="translate(186.0,265.0) skewX(-6) scale(0.78,0.84)" font-size="10" fill="#ffe81e" stroke="#ffe81e" stroke-width="0.9">J</text>
<text transform="translate(249.0,265.0) skewX(6) scale(0.78,0.87)" font-size="10" fill="#fff" stroke="#fff" stroke-width="2.8">H</text><text transform="translate(249.0,265.0) skewX(6) scale(0.78,0.87)" font-size="10" fill="#ffe81e" stroke="#ffe81e" stroke-width="0.9">H</text>
<text transform="translate(250.0,279.0) skewX(-14) scale(0.78,0.88)" font-size="10" fill="#fff" stroke="#fff" stroke-width="2.8">I</text><text transform="translate(250.0,279.0) skewX(-14) scale(0.78,0.88)" font-size="10" fill="#ffe81e" stroke="#ffe81e" stroke-width="0.9">I</text>
<text transform="translate(253.0,293.0) skewX(12) scale(0.78,0.89)" font-size="10" fill="#fff" stroke="#fff" stroke-width="2.8">H</text><text transform="translate(253.0,293.0) skewX(12) scale(0.78,0.89)" font-size="10" fill="#ffb61e" stroke="#ffb61e" stroke-width="0.9">H</text>
<text transform="translate(258.0,304.0) skewX(12) scale(0.78,0.94)" font-size="10" fill="#fff" stroke="#fff" stroke-width="2.8">H</text><text transform="translate(258.0,304.0) skewX(12) scale(0.78,0.94)" font-size="10" fill="#ffe81e" stroke="#ffe81e" stroke-width="0.9">H</text>
<text transform="translate(264.0,315.0) skewX(-22) scale(0.78,0.89)" font-size="10" fill="#fff" stroke="#fff" stroke-width="2.8">J</text><text transform="translate(264.0,315.0) skewX(-22) scale(0.78,0.89)" font-size="10" fill="#ffe81e" stroke="#ffe81e" stroke-width="0.9">J</text>
<text transform="translate(272.0,325.0) skewX(-14) scale(0.78,0.91)" font-size="10" fill="#fff" stroke="#fff" stroke-width="2.8">I</text><text transform="translate(272.0,325.0) skewX(-14) scale(0.78,0.91)" font-size="10" fill="#ffe81e" stroke="#ffe81e" stroke-width="0.9">I</text>
<text transform="translate(280.0,335.0) skewX(-6) scale(0.78,0.96)" font-size="10" fill="#fff" stroke="#fff" stroke-width="2.8">J</text><text transform="translate(280.0,335.0) skewX(-6) scale(0.78,0.96)" font-size="10" fill="#ffb61e" stroke="#ffb61e" stroke-width="0.9">J</text>
<text transform="translate(289.0,344.0) skewX(6) scale(0.78,0.92)" font-size="10" fill="#fff" stroke="#fff" stroke-width="2.8">J</text><text transform="translate(289.0,344.0) skewX(6) scale(0.78,0.92)" font-size="10" fill="#ffe81e" stroke="#ffe81e" stroke-width="0.9">J</text>
<text transform="translate(298.0,352.0) skewX(-22) scale(0.78,0.91)" font-size="10" fill="#fff" stroke="#fff" stroke-width="2.8">H</text><text transform="translate(298.0,352.0) skewX(-22) scale(0.78,0.91)" font-size="10" fill="#ffb61e" stroke="#ffb61e" stroke-width="0.9">H</text>
<text transform="translate(306.0,360.0) skewX(-14) scale(0.78,0.83)" font-size="10" fill="#fff" stroke="#fff" stroke-width="2.8">I</text><text transform="translate(306.0,360.0) skewX(-14) scale(0.78,0.83)" font-size="10" fill="#ffe81e" stroke="#ffe81e" stroke-width="0.9">I</text>
<text transform="translate(314.0,368.0) skewX(-22) scale(0.78,0.82)" font-size="10" fill="#fff" stroke="#fff" stroke-width="2.8">J</text><text transform="translate(314.0,368.0) skewX(-22) scale(0.78,0.82)" font-size="10" fill="#ffb61e" stroke="#ffb61e" stroke-width="0.9">J</text>
<text transform="translate(322.0,376.0) skewX(12) scale(0.78,0.99)" font-size="10" fill="#fff" stroke="#fff" stroke-width="2.8">J</text><text transform="translate(322.0,376.0) skewX(12) scale(0.78,0.99)" font-size="10" fill="#ffe81e" stroke="#ffe81e" stroke-width="0.9">J</text>
<text transform="translate(330.0,384.0) skewX(-6) scale(0.78,1.00)" font-size="10" fill="#fff" stroke="#fff" stroke-width="2.8">I</text><text transform="translate(330.0,384.0) skewX(-6) scale(0.78,1.00)" font-size="10" fill="#ffe81e" stroke="#ffe81e" stroke-width="0.9">I</text>
<text transform="translate(252.0,273.0) skewX(-22) scale(0.78,0.81)" font-size="10" fill="#fff" stroke="#fff" stroke-width="2.8">I</text><text transform="translate(252.0,273.0) skewX(-22) scale(0.78,0.81)" font-size="10" fill="#ffb61e" stroke="#ffb61e" stroke-width="0.9">I</text>
<text transform="translate(256.0,299.0) skewX(-14) scale(0.78,0.94)" font-size="10" fill="#fff" stroke="#fff" stroke-width="2.8">I</text><text transform="translate(256.0,299.0) skewX(-14) scale(0.78,0.94)" font-size="10" fill="#ffe81e" stroke="#ffe81e" stroke-width="0.9">I</text>
<text transform="translate(268.0,319.0) skewX(-22) scale(0.78,0.94)" font-size="10" fill="#fff" stroke="#fff" stroke-width="2.8">H</text><text transform="translate(268.0,319.0) skewX(-22) scale(0.78,0.94)" font-size="10" fill="#ffe81e" stroke="#ffe81e" stroke-width="0.9">H</text>
<text transform="translate(276.0,330.0) skewX(-22) scale(0.78,0.81)" font-size="10" fill="#fff" stroke="#fff" stroke-width="2.8">I</text><text transform="translate(276.0,330.0) skewX(-22) scale(0.78,0.81)" font-size="10" fill="#ffe81e" stroke="#ffe81e" stroke-width="0.9">I</text>
<text transform="translate(285.0,340.0) skewX(12) scale(0.78,0.95)" font-size="10" fill="#fff" stroke="#fff" stroke-width="2.8">I</text><text transform="translate(285.0,340.0) skewX(12) scale(0.78,0.95)" font-size="10" fill="#ffb61e" stroke="#ffb61e" stroke-width="0.9">I</text>
<text transform="translate(294.0,348.0) skewX(-14) scale(0.78,0.96)" font-size="10" fill="#fff" stroke="#fff" stroke-width="2.8">H</text><text transform="translate(294.0,348.0) skewX(-14) scale(0.78,0.96)" font-size="10" fill="#ffe81e" stroke="#ffe81e" stroke-width="0.9">H</text>
<text transform="translate(302.0,356.0) skewX(12) scale(0.78,0.98)" font-size="10" fill="#fff" stroke="#fff" stroke-width="2.8">H</text><text transform="translate(302.0,356.0) skewX(12) scale(0.78,0.98)" font-size="10" fill="#ffe81e" stroke="#ffe81e" stroke-width="0.9">H</text>
<text transform="translate(310.0,364.0) skewX(-22) scale(0.78,0.98)" font-size="10" fill="#fff" stroke="#fff" stroke-width="2.8">I</text><text transform="translate(310.0,364.0) skewX(-22) scale(0.78,0.98)" font-size="10" fill="#ffb61e" stroke="#ffb61e" stroke-width="0.9">I</text>
<text transform="translate(318.0,372.0) skewX(6) scale(0.78,0.82)" font-size="10" fill="#fff" stroke="#fff" stroke-width="2.8">I</text><text transform="translate(318.0,372.0) skewX(6) scale(0.78,0.82)" font-size="10" fill="#ffe81e" stroke="#ffe81e" stroke-width="0.9">I</text>
<text transform="translate(326.0,380.0) skewX(-14) scale(0.78,0.84)" font-size="10" fill="#fff" stroke="#fff" stroke-width="2.8">J</text><text transform="translate(326.0,380.0) skewX(-14) scale(0.78,0.84)" font-size="10" fill="#ffe81e" stroke="#ffe81e" stroke-width="0.9">J</text>
<text transform="translate(334.0,389.0) skewX(-22) scale(0.78,0.81)" font-size="10" fill="#fff" stroke="#fff" stroke-width="2.8">I</text><text transform="translate(334.0,389.0) skewX(-22) scale(0.78,0.81)" font-size="10" fill="#ffe81e" stroke="#ffe81e" stroke-width="0.9">I</text>
<text transform="translate(342.0,396.0) skewX(-22) scale(0.78,0.97)" font-size="10" fill="#fff" stroke="#fff" stroke-width="2.8">I</text><text transform="translate(342.0,396.0) skewX(-22) scale(0.78,0.97)" font-size="10" fill="#ffe81e" stroke="#ffe81e" stroke-width="0.9">I</text>
<text transform="translate(348.0,407.0) skewX(-6) scale(0.78,0.90)" font-size="10" fill="#fff" stroke="#fff" stroke-width="2.8">I</text><text transform="translate(348.0,407.0) skewX(-6) scale(0.78,0.90)" font-size="10" fill="#ffe81e" stroke="#ffe81e" stroke-width="0.9">I</text>
<text transform="translate(342.0,411.0) skewX(-14) scale(0.78,0.82)" font-size="10" fill="#fff" stroke="#fff" stroke-width="2.8">I</text><text transform="translate(342.0,411.0) skewX(-14) scale(0.78,0.82)" font-size="10" fill="#ffe81e" stroke="#ffe81e" stroke-width="0.9">I</text>
<text transform="translate(346.0,415.0) skewX(-14) scale(0.78,0.86)" font-size="10" fill="#fff" stroke="#fff" stroke-width="2.8">I</text><text transform="translate(346.0,415.0) skewX(-14) scale(0.78,0.86)" font-size="10" fill="#ffe81e" stroke="#ffe81e" stroke-width="0.9">I</text>
<text transform="translate(350.0,399.0) skewX(-6) scale(0.78,0.88)" font-size="10" fill="#fff" stroke="#fff" stroke-width="2.8">J</text><text transform="translate(350.0,399.0) skewX(-6) scale(0.78,0.88)" font-size="10" fill="#ffe81e" stroke="#ffe81e" stroke-width="0.9">J</text>
<text transform="translate(340.0,405.0) skewX(-22) scale(0.78,0.87)" font-size="10" fill="#fff" stroke="#fff" stroke-width="2.8">H</text><text transform="translate(340.0,405.0) skewX(-22) scale(0.78,0.87)" font-size="10" fill="#ffe81e" stroke="#ffe81e" stroke-width="0.9">H</text>
<text transform="translate(250.9,286.9) skewX(-6) scale(0.78,0.81)" font-size="10.6" fill="#fff" stroke="#fff" stroke-width="3.5">H</text><text transform="translate(250.9,286.9) skewX(-6) scale(0.78,0.81)" font-size="10.6" fill="#ffb61e" stroke="#ffb61e" stroke-width="0.9">H</text>
<text transform="translate(254.1,294.7) skewX(-6) scale(0.78,0.98)" font-size="10.6" fill="#fff" stroke="#fff" stroke-width="3.5">I</text><text transform="translate(254.1,294.7) skewX(-6) scale(0.78,0.98)" font-size="10.6" fill="#ffb61e" stroke="#ffb61e" stroke-width="0.9">I</text>
<text transform="translate(259.3,307.4) skewX(12) scale(0.78,0.90)" font-size="10.6" fill="#fff" stroke="#fff" stroke-width="3.5">H</text><text transform="translate(259.3,307.4) skewX(12) scale(0.78,0.90)" font-size="10.6" fill="#ffb61e" stroke="#ffb61e" stroke-width="0.9">H</text>
<text transform="translate(266.7,314.6) skewX(-6) scale(0.78,0.92)" font-size="10.6" fill="#fff" stroke="#fff" stroke-width="3.5">I</text><text transform="translate(266.7,314.6) skewX(-6) scale(0.78,0.92)" font-size="10.6" fill="#ffb61e" stroke="#ffb61e" stroke-width="0.9">I</text>
<text transform="translate(268.5,322.8) skewX(-22) scale(0.78,0.96)" font-size="10.6" fill="#fff" stroke="#fff" stroke-width="3.5">H</text><text transform="translate(268.5,322.8) skewX(-22) scale(0.78,0.96)" font-size="10.6" fill="#ffe81e" stroke="#ffe81e" stroke-width="0.9">H</text>
<text transform="translate(279.0,329.8) skewX(-22) scale(0.78,0.89)" font-size="10.6" fill="#fff" stroke="#fff" stroke-width="3.5">G</text><text transform="translate(279.0,329.8) skewX(-22) scale(0.78,0.89)" font-size="10.6" fill="#fff27a" stroke="#fff27a" stroke-width="0.9">G</text>
<text transform="translate(284.9,338.2) skewX(-22) scale(0.78,0.87)" font-size="10.6" fill="#fff" stroke="#fff" stroke-width="3.5">G</text><text transform="translate(284.9,338.2) skewX(-22) scale(0.78,0.87)" font-size="10.6" fill="#ffe81e" stroke="#ffe81e" stroke-width="0.9">G</text>
<text transform="translate(293.3,345.0) skewX(-22) scale(0.78,0.91)" font-size="10.6" fill="#fff" stroke="#fff" stroke-width="3.5">I</text><text transform="translate(293.3,345.0) skewX(-22) scale(0.78,0.91)" font-size="10.6" fill="#ffe81e" stroke="#ffe81e" stroke-width="0.9">I</text>
<text transform="translate(300.3,353.5) skewX(-14) scale(0.78,0.94)" font-size="10.6" fill="#fff" stroke="#fff" stroke-width="3.5">I</text><text transform="translate(300.3,353.5) skewX(-14) scale(0.78,0.94)" font-size="10.6" fill="#fff27a" stroke="#fff27a" stroke-width="0.9">I</text>
<text transform="translate(307.6,362.8) skewX(-22) scale(0.78,0.91)" font-size="10.6" fill="#fff" stroke="#fff" stroke-width="3.5">H</text><text transform="translate(307.6,362.8) skewX(-22) scale(0.78,0.91)" font-size="10.6" fill="#ffe81e" stroke="#ffe81e" stroke-width="0.9">H</text>
<text transform="translate(315.7,369.0) skewX(-6) scale(0.78,0.83)" font-size="10.6" fill="#fff" stroke="#fff" stroke-width="3.5">G</text><text transform="translate(315.7,369.0) skewX(-6) scale(0.78,0.83)" font-size="10.6" fill="#ffe81e" stroke="#ffe81e" stroke-width="0.9">G</text>
<text transform="translate(324.4,377.9) skewX(-22) scale(0.78,0.90)" font-size="10.6" fill="#fff" stroke="#fff" stroke-width="3.5">I</text><text transform="translate(324.4,377.9) skewX(-22) scale(0.78,0.90)" font-size="10.6" fill="#ffe81e" stroke="#ffe81e" stroke-width="0.9">I</text>
<text transform="translate(333.4,387.2) skewX(-6) scale(0.78,0.95)" font-size="10.6" fill="#fff" stroke="#fff" stroke-width="3.5">H</text><text transform="translate(333.4,387.2) skewX(-6) scale(0.78,0.95)" font-size="10.6" fill="#ffb61e" stroke="#ffb61e" stroke-width="0.9">H</text>
<text transform="translate(340.4,393.1) skewX(-22) scale(0.78,0.80)" font-size="10.6" fill="#fff" stroke="#fff" stroke-width="3.5">G</text><text transform="translate(340.4,393.1) skewX(-22) scale(0.78,0.80)" font-size="10.6" fill="#fff27a" stroke="#fff27a" stroke-width="0.9">G</text>
<text transform="translate(347.5,403.4) skewX(6) scale(0.78,0.82)" font-size="10.6" fill="#fff" stroke="#fff" stroke-width="3.5">H</text><text transform="translate(347.5,403.4) skewX(6) scale(0.78,0.82)" font-size="10.6" fill="#ffe81e" stroke="#ffe81e" stroke-width="0.9">H</text>
<text transform="translate(348.9,407.9) skewX(-14) scale(0.78,0.99)" font-size="10.6" fill="#fff" stroke="#fff" stroke-width="3.5">H</text><text transform="translate(348.9,407.9) skewX(-14) scale(0.78,0.99)" font-size="10.6" fill="#ffe81e" stroke="#ffe81e" stroke-width="0.9">H</text>
<text transform="translate(344.8,406.4) skewX(12) scale(0.78,0.87)" font-size="10.6" fill="#fff" stroke="#fff" stroke-width="3.5">I</text><text transform="translate(344.8,406.4) skewX(12) scale(0.78,0.87)" font-size="10.6" fill="#ffb61e" stroke="#ffb61e" stroke-width="0.9">I</text>
<text transform="translate(337.6,401.7) skewX(12) scale(0.78,0.85)" font-size="10.6" fill="#fff" stroke="#fff" stroke-width="3.5">H</text><text transform="translate(337.6,401.7) skewX(12) scale(0.78,0.85)" font-size="10.6" fill="#fff27a" stroke="#fff27a" stroke-width="0.9">H</text>
<text transform="translate(352.2,400.2) skewX(-14) scale(0.78,0.86)" font-size="10.6" fill="#fff" stroke="#fff" stroke-width="3.5">H</text><text transform="translate(352.2,400.2) skewX(-14) scale(0.78,0.86)" font-size="10.6" fill="#ffb61e" stroke="#ffb61e" stroke-width="0.9">H</text>
<text transform="translate(357.2,407.2) skewX(-14) scale(0.78,0.99)" font-size="10.6" fill="#fff" stroke="#fff" stroke-width="3.5">I</text><text transform="translate(357.2,407.2) skewX(-14) scale(0.78,0.99)" font-size="10.6" fill="#ffe81e" stroke="#ffe81e" stroke-width="0.9">I</text>
<text transform="translate(401.0,361.0) skewX(-14) scale(0.78,0.90)" font-size="10" fill="#fff" stroke="#fff" stroke-width="2.8">H</text><text transform="translate(401.0,361.0) skewX(-14) scale(0.78,0.90)" font-size="10" fill="#ffe81e" stroke="#ffe81e" stroke-width="0.9">H</text>
<text transform="translate(408.0,367.0) skewX(-22) scale(0.78,0.99)" font-size="10" fill="#fff" stroke="#fff" stroke-width="2.8">H</text><text transform="translate(408.0,367.0) skewX(-22) scale(0.78,0.99)" font-size="10" fill="#ffe81e" stroke="#ffe81e" stroke-width="0.9">H</text>
<text transform="translate(414.0,373.0) skewX(-22) scale(0.78,0.90)" font-size="10" fill="#fff" stroke="#fff" stroke-width="2.8">H</text><text transform="translate(414.0,373.0) skewX(-22) scale(0.78,0.90)" font-size="10" fill="#ffe81e" stroke="#ffe81e" stroke-width="0.9">H</text>
<text transform="translate(420.0,377.0) skewX(12) scale(0.78,0.96)" font-size="10" fill="#fff" stroke="#fff" stroke-width="2.8">H</text><text transform="translate(420.0,377.0) skewX(12) scale(0.78,0.96)" font-size="10" fill="#ffe81e" stroke="#ffe81e" stroke-width="0.9">H</text>
<text transform="translate(406.0,375.0) skewX(-6) scale(0.78,0.87)" font-size="10" fill="#fff" stroke="#fff" stroke-width="2.8">H</text><text transform="translate(406.0,375.0) skewX(-6) scale(0.78,0.87)" font-size="10" fill="#ffe81e" stroke="#ffe81e" stroke-width="0.9">H</text>
<text transform="translate(412.0,381.0) skewX(6) scale(0.78,0.99)" font-size="10" fill="#fff" stroke="#fff" stroke-width="2.8">H</text><text transform="translate(412.0,381.0) skewX(6) scale(0.78,0.99)" font-size="10" fill="#ffe81e" stroke="#ffe81e" stroke-width="0.9">H</text>
<text transform="translate(418.0,383.0) skewX(-22) scale(0.78,0.88)" font-size="10" fill="#fff" stroke="#fff" stroke-width="2.8">H</text><text transform="translate(418.0,383.0) skewX(-22) scale(0.78,0.88)" font-size="10" fill="#ffe81e" stroke="#ffe81e" stroke-width="0.9">H</text>
<text transform="translate(424.0,375.0) skewX(-22) scale(0.78,0.87)" font-size="10" fill="#fff" stroke="#fff" stroke-width="2.8">H</text><text transform="translate(424.0,375.0) skewX(-22) scale(0.78,0.87)" font-size="10" fill="#ffe81e" stroke="#ffe81e" stroke-width="0.9">H</text>
<text transform="translate(225.0,399.0) skewX(-6) scale(0.78,0.85)" font-size="10" fill="#fff" stroke="#fff" stroke-width="2.8">J</text><text transform="translate(225.0,399.0) skewX(-6) scale(0.78,0.85)" font-size="10" fill="#d4e61e" stroke="#d4e61e" stroke-width="0.9">J</text>
<text transform="translate(246.0,385.0) skewX(12) scale(0.78,0.90)" font-size="10" fill="#fff" stroke="#fff" stroke-width="2.8">K</text><text transform="translate(246.0,385.0) skewX(12) scale(0.78,0.90)" font-size="10" fill="#d4e61e" stroke="#d4e61e" stroke-width="0.9">K</text>
<text transform="translate(248.0,381.0) skewX(6) scale(0.78,1.00)" font-size="10" fill="#fff" stroke="#fff" stroke-width="2.8">K</text><text transform="translate(248.0,381.0) skewX(6) scale(0.78,1.00)" font-size="10" fill="#d4e61e" stroke="#d4e61e" stroke-width="0.9">K</text>
<text transform="translate(250.0,389.0) skewX(-14) scale(0.78,0.99)" font-size="10" fill="#fff" stroke="#fff" stroke-width="2.8">J</text><text transform="translate(250.0,389.0) skewX(-14) scale(0.78,0.99)" font-size="10" fill="#d4e61e" stroke="#d4e61e" stroke-width="0.9">J</text>
<text transform="translate(290.0,389.0) skewX(-14) scale(0.78,0.91)" font-size="10" fill="#fff" stroke="#fff" stroke-width="2.8">J</text><text transform="translate(290.0,389.0) skewX(-14) scale(0.78,0.91)" font-size="10" fill="#ffe81e" stroke="#ffe81e" stroke-width="0.9">J</text>
<text transform="translate(314.0,397.0) skewX(12) scale(0.78,0.93)" font-size="10" fill="#fff" stroke="#fff" stroke-width="2.8">K</text><text transform="translate(314.0,397.0) skewX(12) scale(0.78,0.93)" font-size="10" fill="#7ec81e" stroke="#7ec81e" stroke-width="0.9">K</text>
<text transform="translate(336.0,399.0) skewX(-6) scale(0.78,0.92)" font-size="10" fill="#fff" stroke="#fff" stroke-width="2.8">M</text><text transform="translate(336.0,399.0) skewX(-6) scale(0.78,0.92)" font-size="10" fill="#3fae2a" stroke="#3fae2a" stroke-width="0.9">M</text>
<text transform="translate(342.0,421.0) skewX(12) scale(0.78,0.83)" font-size="10" fill="#fff" stroke="#fff" stroke-width="2.8">K</text><text transform="translate(342.0,421.0) skewX(12) scale(0.78,0.83)" font-size="10" fill="#d4e61e" stroke="#d4e61e" stroke-width="0.9">K</text>
<text transform="translate(344.0,427.0) skewX(6) scale(0.78,0.93)" font-size="10" fill="#fff" stroke="#fff" stroke-width="2.8">J</text><text transform="translate(344.0,427.0) skewX(6) scale(0.78,0.93)" font-size="10" fill="#d4e61e" stroke="#d4e61e" stroke-width="0.9">J</text>
<text transform="translate(343.0,431.0) skewX(-6) scale(0.78,0.83)" font-size="10" fill="#fff" stroke="#fff" stroke-width="2.8">K</text><text transform="translate(343.0,431.0) skewX(-6) scale(0.78,0.83)" font-size="10" fill="#d4e61e" stroke="#d4e61e" stroke-width="0.9">K</text>
<text transform="translate(326.0,485.0) skewX(6) scale(0.78,0.94)" font-size="10" fill="#fff" stroke="#fff" stroke-width="2.8">J</text><text transform="translate(326.0,485.0) skewX(6) scale(0.78,0.94)" font-size="10" fill="#7ec81e" stroke="#7ec81e" stroke-width="0.9">J</text>
<text transform="translate(325.0,497.0) skewX(-6) scale(0.78,0.92)" font-size="10" fill="#fff" stroke="#fff" stroke-width="2.8">M</text><text transform="translate(325.0,497.0) skewX(-6) scale(0.78,0.92)" font-size="10" fill="#3fae2a" stroke="#3fae2a" stroke-width="0.9">M</text>
<text transform="translate(331.0,497.0) skewX(-14) scale(0.78,0.87)" font-size="10" fill="#fff" stroke="#fff" stroke-width="2.8">I</text><text transform="translate(331.0,497.0) skewX(-14) scale(0.78,0.87)" font-size="10" fill="#7ec81e" stroke="#7ec81e" stroke-width="0.9">I</text>
<text transform="translate(323.0,502.0) skewX(-14) scale(0.78,0.90)" font-size="10" fill="#fff" stroke="#fff" stroke-width="2.8">K</text><text transform="translate(323.0,502.0) skewX(-14) scale(0.78,0.90)" font-size="10" fill="#d4e61e" stroke="#d4e61e" stroke-width="0.9">K</text>
<text transform="translate(164.5,459.0) skewX(-6) scale(0.78,0.86)" font-size="10" fill="#fff" stroke="#fff" stroke-width="2.8">G</text><text transform="translate(164.5,459.0) skewX(-6) scale(0.78,0.86)" font-size="10" fill="#ffb61e" stroke="#ffb61e" stroke-width="0.9">G</text>
<text transform="translate(157.2,465.7) skewX(12) scale(0.78,0.83)" font-size="10" fill="#fff" stroke="#fff" stroke-width="2.8">G</text><text transform="translate(157.2,465.7) skewX(12) scale(0.78,0.83)" font-size="10" fill="#ffb61e" stroke="#ffb61e" stroke-width="0.9">G</text>
<text transform="translate(160.0,462.0) skewX(-14) scale(0.78,0.99)" font-size="10" fill="#fff" stroke="#fff" stroke-width="2.8">G</text><text transform="translate(160.0,462.0) skewX(-14) scale(0.78,0.99)" font-size="10" fill="#ffe81e" stroke="#ffe81e" stroke-width="0.9">G</text>
<text transform="translate(165.4,476.5) skewX(-6) scale(0.78,0.92)" font-size="10" fill="#fff" stroke="#fff" stroke-width="2.8">H</text><text transform="translate(165.4,476.5) skewX(-6) scale(0.78,0.92)" font-size="10" fill="#ffe81e" stroke="#ffe81e" stroke-width="0.9">H</text>
<text transform="translate(164.0,472.0) skewX(-6) scale(0.78,0.83)" font-size="10" fill="#fff" stroke="#fff" stroke-width="2.8">H</text><text transform="translate(164.0,472.0) skewX(-6) scale(0.78,0.83)" font-size="10" fill="#ffe81e" stroke="#ffe81e" stroke-width="0.9">H</text>
<text transform="translate(155.6,415.8) skewX(-6) scale(0.78,0.99)" font-size="10" fill="#fff" stroke="#fff" stroke-width="2.8">I</text><text transform="translate(155.6,415.8) skewX(-6) scale(0.78,0.99)" font-size="10" fill="#ffe81e" stroke="#ffe81e" stroke-width="0.9">I</text>
<text transform="translate(270.0,381.0) skewX(-6) scale(0.78,1.00)" font-size="10" fill="#fff" stroke="#fff" stroke-width="2.8">I</text><text transform="translate(270.0,381.0) skewX(-6) scale(0.78,1.00)" font-size="10" fill="#ffe81e" stroke="#ffe81e" stroke-width="0.9">I</text>
<text transform="translate(276.0,381.0) skewX(-22) scale(0.78,0.83)" font-size="10" fill="#fff" stroke="#fff" stroke-width="2.8">I</text><text transform="translate(276.0,381.0) skewX(-22) scale(0.78,0.83)" font-size="10" fill="#ffe81e" stroke="#ffe81e" stroke-width="0.9">I</text>
</g>
<rect x="155.6" y="152.8" width="3.2" height="3.2" fill="#000"/><rect x="209" y="198.8" width="3.2" height="3.2" fill="#000"/>
</svg>
</div>
<div id="panel"></div>
<div class="hdr" id="hdr1"></div>
<div class="tb" id="tb1"></div>
<div class="hdr" id="hdr2"></div>
<div class="tb" id="tb2"></div>

<!-- legend -->
<div id="axis"></div>
<span class="ll" style="top:62.5px;color:#ff3300">A</span><i class="lb" style="top:67px;background:#ff3300"></i><i class="lt" style="top:69px"></i><span class="ln" style="top:63.00px">190</span>
<span class="ll" style="top:79.5px;color:#ff5500">B</span><i class="lb" style="top:84px;background:#ff5500"></i><i class="lt" style="top:86px"></i><span class="ln" style="top:80.47px">180</span>
<span class="ll" style="top:97.5px;color:#ff6a00">C</span><i class="lb" style="top:102px;background:#ff6a00"></i><i class="lt" style="top:104px"></i><span class="ln" style="top:97.95px">170</span>
<span class="ll" style="top:114.5px;color:#ff8011">D</span><i class="lb" style="top:119px;background:#ff8011"></i><i class="lt" style="top:121px"></i><span class="ln" style="top:115.42px">160</span>
<span class="ll" style="top:132.5px;color:#ff9419">E</span><i class="lb" style="top:137px;background:#ff9419"></i><i class="lt" style="top:139px"></i><span class="ln" style="top:132.89px">150</span>
<span class="ll" style="top:149.5px;color:#ffa522">F</span><i class="lb" style="top:154px;background:#ffa522"></i><i class="lt" style="top:156px"></i><span class="ln" style="top:150.37px">140</span>
<span class="ll" style="top:167.5px;color:#ffb727">G</span><i class="lb" style="top:172px;background:#ffb727"></i><i class="lt" style="top:174px"></i><span class="ln" style="top:167.84px">130</span>
<span class="ll" style="top:184.5px;color:#f8cc2c">H</span><i class="lb" style="top:189px;background:#f8cc2c"></i><i class="lt" style="top:191px"></i><span class="ln" style="top:185.32px">120</span>
<span class="ll" style="top:202.5px;color:#dcc82a">I</span><i class="lb" style="top:207px;background:#dcc82a"></i><i class="lt" style="top:209px"></i><span class="ln" style="top:202.79px">110</span>
<span class="ll" style="top:219.5px;color:#b9c020">J</span><i class="lb" style="top:224px;background:#b9c020"></i><i class="lt" style="top:226px"></i><span class="ln" style="top:220.26px">100</span>
<span class="ll" style="top:237.5px;color:#a4be1e">K</span><i class="lb" style="top:242px;background:#a4be1e"></i><i class="lt" style="top:244px"></i><span class="ln" style="top:237.74px">90</span>
<span class="ll" style="top:254.5px;color:#85b81e">L</span><i class="lb" style="top:259px;background:#85b81e"></i><i class="lt" style="top:261px"></i><span class="ln" style="top:255.21px">80</span>
<span class="ll" style="top:272.5px;color:#66b21e">M</span><i class="lb" style="top:277px;background:#66b21e"></i><i class="lt" style="top:279px"></i><span class="ln" style="top:272.68px">70</span>
<span class="ll" style="top:289.5px;color:#44a51e">N</span><i class="lb" style="top:294px;background:#44a51e"></i><i class="lt" style="top:296px"></i><span class="ln" style="top:290.16px">60</span>
<span class="ll" style="top:307.5px;color:#3b9650">O</span><i class="lb" style="top:312px;background:#3b9650"></i><i class="lt" style="top:314px"></i><span class="ln" style="top:307.63px">50</span>
<span class="ll" style="top:324.5px;color:#3b9070">P</span><i class="lb" style="top:329px;background:#3b9070"></i><i class="lt" style="top:331px"></i><span class="ln" style="top:325.11px">40</span>
<span class="ll" style="top:342.5px;color:#207f88">Q</span><i class="lb" style="top:347px;background:#207f88"></i><i class="lt" style="top:349px"></i><span class="ln" style="top:342.58px">30</span>
<span class="ll" style="top:359.5px;color:#0a68a8">R</span><i class="lb" style="top:364px;background:#0a68a8"></i><i class="lt" style="top:366px"></i><span class="ln" style="top:360.05px">20</span>
<span class="ll" style="top:377.5px;color:#0a50d8">S</span><i class="lb" style="top:382px;background:#0a50d8"></i><i class="lt" style="top:384px"></i><span class="ln" style="top:377.53px">10</span>
<span class="ll" style="top:394.5px;color:#0032ff">T</span><i class="lb" style="top:399px;background:#0032ff"></i><i class="lt" style="top:401px"></i><span class="ln" style="top:395.00px">0</span>

<!-- levels controls -->
<div class="radio on" style="top:97px"></div>
<div class="radio" style="top:119px"></div>
<div class="inp dis" style="left:694px;top:138px;width:70px;height:21px"></div>
<div id="pm"></div>
<div class="radio" style="top:170px"></div>
<div class="inp dis" style="left:694px;top:189px;width:70px;height:24px"></div>
<div class="inp en" style="left:674px;top:236px;width:102px;height:22px"></div>
<div class="inp en" style="left:674px;top:257px;width:102px;height:22px"></div>
<div class="radio" style="top:308px"></div>
<div class="radio" style="top:330px"></div>
<div class="radio on" style="top:356px"></div>

<!-- tree -->
<div class="tl" style="left:527px;top:501px;width:1px;height:163px"></div>
<div class="tl" style="left:527px;top:501px;width:10px;height:1px"></div>
<div class="tl" style="left:527px;top:520px;width:10px;height:1px"></div>
<div class="tl" style="left:527px;top:539px;width:10px;height:1px"></div>
<div class="tl" style="left:547px;top:549px;width:1px;height:48px"></div>
<div class="tl" style="left:547px;top:558px;width:10px;height:1px"></div>
<div class="tl" style="left:547px;top:577px;width:10px;height:1px"></div>
<div class="tl" style="left:547px;top:596px;width:10px;height:1px"></div>
<div class="tl" style="left:527px;top:615px;width:10px;height:1px"></div>
<div class="tl" style="left:547px;top:624px;width:1px;height:11px"></div>
<div class="tl" style="left:547px;top:634px;width:10px;height:1px"></div>
<div class="tl" style="left:527px;top:653px;width:10px;height:1px"></div>
<div class="exp" style="top:535px"></div>
<div class="exp" style="top:611px"></div>
<div id="sel"></div>

<!-- selected-button backgrounds -->
<div class="obox" style="left:646px;top:25px"></div>
<div class="obox" style="left:706px;top:25px"></div>
<div class="obox" style="left:521px;top:464px"></div>
<div class="sep" style="left:700px;top:27px;height:20px"></div>
<div class="sep" style="left:601px;top:466px;height:20px"></div>
<div class="sep" style="left:635px;top:466px;height:20px"></div>

<svg id="icons" width="848" height="664" viewBox="0 0 848 664" style="left:0;top:0">
<defs>
  <linearGradient id="gSort" gradientUnits="userSpaceOnUse" x1="0" y1="30" x2="0" y2="43"><stop offset="0" stop-color="#e63a22"/><stop offset="0.40" stop-color="#dc4430"/><stop offset="0.62" stop-color="#2a72b6"/><stop offset="1" stop-color="#1c6cb4"/></linearGradient>
  <radialGradient id="gGlow" cx="0.5" cy="0.5" r="0.5"><stop offset="0.5" stop-color="#ffe23a" stop-opacity="0.9"/><stop offset="1" stop-color="#ffc020" stop-opacity="0"/></radialGradient>
  <linearGradient id="gCut" x1="0" y1="0" x2="1" y2="1"><stop offset="0" stop-color="#c4c4c4"/><stop offset="1" stop-color="#8e8e8e"/></linearGradient>
  <radialGradient id="gSun" cx="0.45" cy="0.4" r="0.6"><stop offset="0" stop-color="#fff9a8"/><stop offset="0.6" stop-color="#ffe640"/><stop offset="1" stop-color="#f8c820"/></radialGradient>
  <linearGradient id="gCyl" x1="0" y1="0" x2="1" y2="0"><stop offset="0" stop-color="#ffffff"/><stop offset="0.6" stop-color="#f4f4f4"/><stop offset="1" stop-color="#c8c8c8"/></linearGradient>
  <linearGradient id="gTeal" x1="0" y1="0" x2="0" y2="1"><stop offset="0" stop-color="#a6e0d8"/><stop offset="1" stop-color="#6cc4ba"/></linearGradient>
  <linearGradient id="gRedCyl" x1="0" y1="0" x2="1" y2="0"><stop offset="0" stop-color="#f06a50"/><stop offset="0.5" stop-color="#e03828"/><stop offset="1" stop-color="#3a6ea8"/></linearGradient>
</defs>

<!-- ===== top toolbar ===== -->
<!-- legend icon "A=" -->
<text x="525.7" y="35.8" font-family="Liberation Sans, sans-serif" font-size="10.4" font-weight="bold" fill="#c43c1c">A</text>
<rect x="535.2" y="28.9" width="5.7" height="1.9" fill="#cc3c16"/>
<rect x="535.2" y="34" width="5.7" height="1.9" fill="#e8b614"/>
<rect x="527" y="39" width="13.9" height="2" fill="#3a9898"/>
<rect x="527" y="44" width="13.9" height="2" fill="#398cc8"/>
<!-- dropdown triangles -->
<path d="M550,33.8 L559.2,33.8 L554.6,38.8 Z" fill="#17267c"/>
<path d="M604,33.8 L613.2,33.8 L608.6,38.8 Z" fill="#17267c"/>
<!-- sort arrows -->
<g fill="none" stroke="url(#gSort)" stroke-width="2.2" stroke-linecap="round" stroke-linejoin="round">
  <path d="M631,31 C628.4,30.8 628,32.4 628,34.4 L628,41.4"/>
  <path d="M624.6,38.2 L628,41.8 L631.4,38.2"/>
  <path d="M633.4,42.2 C636.2,42.4 636.5,40.8 636.5,38.8 L636.5,31.6"/>
  <path d="M633,35 L636.5,31.2 L640,35"/>
</g>
<!-- sun -->
<path d="M663.4,38.1 L667.2,38.8 M662.6,40.1 L664.8,41.6 M661.1,41.6 L663.2,44.8 M659.1,42.4 L659.6,45.0 M656.9,42.4 L656.2,46.2 M654.9,41.6 L653.4,43.8 M653.4,40.1 L650.2,42.2 M652.6,38.1 L650.0,38.6 M652.6,35.9 L648.8,35.2 M653.4,33.9 L651.2,32.4 M654.9,32.4 L652.8,29.2 M656.9,31.6 L656.4,29.0 M659.1,31.6 L659.8,27.8 M661.1,32.4 L662.6,30.2 M662.6,33.9 L665.8,31.8 M663.4,35.9 L666.0,35.4" stroke="#e08c08" stroke-width="0.8" fill="none" stroke-linecap="round"/>
<circle cx="658" cy="37" r="8" fill="url(#gGlow)"/>
<circle cx="658" cy="37" r="4.9" fill="url(#gSun)"/>
<!-- cut cylinder -->
<path d="M676.6,31.4 L676.6,41.6 C676.8,44 681,46 685.6,46 C689.2,46 692,45.2 692,43 L692,37.6 Z" fill="url(#gCyl)" stroke="#858585" stroke-width="1.2" stroke-linejoin="round"/>
<path d="M676.6,31.4 C676.4,28.6 680.6,27.8 684.6,29.4 C689,31.2 692.2,34.6 692,37.8 C691.8,38.8 688.6,37.6 684.6,36 C680.4,34.2 676.8,32.8 676.6,31.4 Z" fill="url(#gCut)" stroke="#858585" stroke-width="1.1" stroke-linejoin="round"/>
<!-- legend arrows button -->
<rect x="709.2" y="29" width="10" height="2" fill="#d83a1c"/>
<rect x="709.2" y="34" width="10" height="2" fill="#b9cfe4"/>
<rect x="709.2" y="39" width="10" height="2" fill="#b9cfe4"/>
<rect x="709.2" y="44" width="10" height="2" fill="#2f80cc"/>
<path d="M720.2,32.2 L727.6,32.2 L723.9,28 Z" fill="#e0401c"/>
<path d="M720.2,42.8 L727.6,42.8 L723.9,47 Z" fill="#2f7fd0"/>
<!-- bar chart -->
<rect x="737" y="37" width="4" height="6.6" fill="#3c8fd8" stroke="#2a6cb0" stroke-width="0.6"/>
<rect x="741" y="30.4" width="4" height="13.2" fill="#7cc8c0" stroke="#3a8f8c" stroke-width="0.6"/>
<rect x="745" y="33.4" width="4" height="10.2" fill="#ffe23a" stroke="#c89a20" stroke-width="0.6"/>
<rect x="749" y="36.4" width="3.4" height="7.2" fill="#e8482c" stroke="#a82c1c" stroke-width="0.6"/>
<rect x="735.4" y="43.4" width="17.8" height="1" fill="#3a8f9c"/>

<!-- ===== -/+ and check ===== -->
<rect x="774" y="147.5" width="8.4" height="1.4" fill="#9a9a9a"/>
<rect x="792.6" y="147.5" width="8.4" height="1.4" fill="#9a9a9a"/>
<rect x="796.1" y="144" width="1.4" height="8.4" fill="#9a9a9a"/>
<path d="M772.8,200.8 L775.4,199.2 L778.4,203.6 C780.6,200.2 783.6,196.8 786.4,195.2 L787.2,196 C784.4,199 781.4,203.6 779.4,207.8 L777.6,207.8 C776.4,205.2 774.6,202.6 772.8,200.8 Z" fill="#7a7a7a"/>

<!-- ===== bottom toolbar ===== -->
<!-- icon 1 (selected) : dies white, workpiece teal -->
<g stroke-width="1">
  <path d="M524.5,467.5 H541.5 V473 H538 V471 H528.5 V473 H524.5 Z" fill="#f2f2f2" stroke="#8a8a8a"/>
  <path d="M524.5,484.5 H541.5 V479 H538 V481 H528.5 V479 H524.5 Z" fill="#f2f2f2" stroke="#8a8a8a"/>
  <rect x="528.5" y="471" width="9.6" height="10" fill="url(#gTeal)" stroke="#1f6c8c"/>
</g>
<!-- icon 2 : dies teal, workpiece grey -->
<g stroke-width="1">
  <path d="M550.5,467.5 H567.5 V474 H564 V471.5 H554.5 V474 H550.5 Z" fill="url(#gTeal)" stroke="#1f6c8c"/>
  <path d="M550.5,484.5 H567.5 V478 H564 V480.5 H554.5 V478 H550.5 Z" fill="url(#gTeal)" stroke="#1f6c8c"/>
  <rect x="554.5" y="471.5" width="9.6" height="9" fill="#ebebeb" stroke="#8c8c8c"/>
</g>
<!-- icon 3 : all teal -->
<g stroke-width="1">
  <path d="M576.5,467.5 H593.5 V474 H590 V471.5 H580.5 V474 H576.5 Z" fill="url(#gTeal)" stroke="#1f6c8c"/>
  <path d="M576.5,484.5 H593.5 V478 H590 V480.5 H580.5 V478 H576.5 Z" fill="url(#gTeal)" stroke="#1f6c8c"/>
  <rect x="580.5" y="471.5" width="9.6" height="9" fill="url(#gTeal)" stroke="#1f6c8c"/>
</g>
<!-- share icon -->
<path d="M622.6,469.9 L614.9,477.9 L624.5,482.5" fill="none" stroke="#3a7f9e" stroke-width="1.3"/>
<circle cx="622.6" cy="469.9" r="3.2" fill="#9adad2" stroke="#3a8a96" stroke-width="0.9"/>
<circle cx="614.9" cy="477.9" r="2.8" fill="#ffd83a" stroke="#c89a18" stroke-width="0.9"/>
<circle cx="624.5" cy="482.6" r="2.5" fill="#e63a2a" stroke="#a8281c" stroke-width="0.9"/>
<!-- chart + cylinder icon -->
<linearGradient id="gCylB" gradientUnits="userSpaceOnUse" x1="0" y1="472" x2="0" y2="485"><stop offset="0" stop-color="#e8473a"/><stop offset="0.55" stop-color="#d8402e"/><stop offset="1" stop-color="#3a78b4"/></linearGradient>
<path d="M650,473.4 L650,481.8 C650,483.6 652.6,484.8 656,484.8 C659.4,484.8 662,483.6 662,481.8 L662,473.4 Z" fill="url(#gCylB)"/>
<ellipse cx="656" cy="473.4" rx="6" ry="2.9" fill="#f47c74"/>
<rect x="644.6" y="467.6" width="12.2" height="11.8" fill="#d4ebf6" stroke="#3a7c9a" stroke-width="1.1"/>
<path d="M648.6,468 V479 M652.6,468 V479 M645,471.4 H656.4 M645,475.4 H656.4" stroke="#ffffff" stroke-width="0.9"/>
<path d="M645.6,477.4 L648.4,475.2 L650.2,476 L652.4,473.2 L653.6,473.8 L656.2,470.4" fill="none" stroke="#e0301c" stroke-width="1.3"/>

<!-- ===== red annotation arrows ===== -->
<g fill="#cc0204" stroke="#cc0204">
  <line x1="489.6" y1="72.4" x2="513" y2="52.6" stroke-width="3"/>
  <path d="M523.2,44 L507.4,47.4 L517.2,59 Z" stroke-width="0.5"/>
  <line x1="618.3" y1="362.5" x2="656" y2="362.5" stroke-width="2.8"/>
  <path d="M669.2,362.5 L654.3,355.2 L654.3,369.8 Z" stroke-width="0.4"/>
  <line x1="457.4" y1="476.5" x2="502" y2="476.5" stroke-width="2.8"/>
  <path d="M515.1,476.5 L500.9,469.4 L500.9,483.6 Z" stroke-width="0.4"/>
  <line x1="494.4" y1="577.6" x2="532" y2="577.6" stroke-width="2.8"/>
  <path d="M545.1,577.6 L530,570.3 L530,584.9 Z" stroke-width="0.4"/>
</g>

<!-- ===== axis triad ===== -->
<g fill="none" stroke-width="1">
  <line x1="456.4" y1="45.2" x2="456.2" y2="63.6" stroke="#b56cc4"/>
  <line x1="456.2" y1="63.6" x2="456.1" y2="80.1" stroke="#e0bfe6"/>
  <line x1="456.1" y1="80.1" x2="440.2" y2="84.2" stroke="#ffb9c0"/>
  <line x1="440.2" y1="84.2" x2="421.4" y2="88.8" stroke="#ff6474"/>
  <line x1="456.1" y1="80.1" x2="468.5" y2="91.6" stroke="#ffb9c0"/>
  <line x1="468.5" y1="91.6" x2="474.6" y2="97" stroke="#ff6474"/>
  <path d="M440.2,67 L461.7,62 L472.6,72.4 L451.1,77 Z M440.2,67 L440.2,87.9 L451.1,98.1 L451.1,77 M451.1,98.1 L472.6,92.9 L472.6,72.4" stroke="#3c3c3c" stroke-width="1"/>
</g>
<text x="458.8" y="42.6" font-family="Liberation Sans, sans-serif" font-size="13" fill="#a455b6">Z</text>
<text x="423" y="86.6" font-family="Liberation Sans, sans-serif" font-size="13" fill="#ff4a5c">X</text>
<text x="476.6" y="94.4" font-family="Liberation Sans, sans-serif" font-size="13" fill="#ff4a5c">Y</text>
</svg>

<span class="hb" id="h1" style="left:522.81px;top:4.00px;transform:scaleX(0.9816);">Effective Stress</span>
<span class="hb" id="h1u" style="left:809.71px;top:4.00px;transform:scaleX(0.9771);">[MPa]</span>
<span class="t" id="tbauto" style="left:572.65px;top:30.00px;transform:scaleX(1.0310);">Auto</span>
<span class="t" id="lv" style="left:654.40px;top:76.00px;transform:scaleX(0.9416);">Levels</span>
<span class="t" id="r1" style="left:689.04px;top:96.00px;transform:scaleX(1.0652);">Auto</span>
<span class="t" id="r2" style="left:689.03px;top:118.00px;transform:scaleX(1.0155);">Count</span>
<span class="t" id="i20" style="left:697.38px;top:142.00px;transform:scaleX(0.9557);color:#8c8c8c">20</span>
<span class="t" id="r3" style="left:688.64px;top:169.00px;transform:scaleX(0.9338);">Step size</span>
<span class="t" id="i10" style="left:696.33px;top:194.00px;transform:scaleX(1.0341);color:#8c8c8c">10</span>
<span class="t" id="fr" style="left:654.81px;top:217.50px;transform:scaleX(0.9761);">Field range</span>
<span class="t" id="i185" style="left:682.01px;top:241.00px;transform:scaleX(0.9003);">185</span>
<span class="t" id="i4" style="left:681.58px;top:262.50px;transform:scaleX(0.9257);">4</span>
<span class="t" id="reset" style="left:694.99px;top:284.50px;transform:scaleX(0.9274);color:#0000f0;text-decoration:underline">Reset</span>
<span class="t" id="r4" style="left:688.89px;top:307.00px;transform:scaleX(1.0050);">Within step</span>
<span class="t" id="r5" style="left:688.89px;top:329.00px;transform:scaleX(1.0246);">Within operation</span>
<span class="t" id="r6" style="left:688.54px;top:355.00px;transform:scaleX(0.9926);">User defined</span>
<span class="hb" id="h2" style="left:523.69px;top:443.00px;transform:scaleX(0.9940);">Workpiece fields</span>
<span class="t" id="t1" style="left:538.86px;top:494.60px;transform:scaleX(0.9736);">Plain surface</span>
<span class="t" id="t2" style="left:539.88px;top:513.60px;transform:scaleX(0.9897);">Temperature</span>
<span class="t" id="t3" style="left:539.05px;top:532.60px;transform:scaleX(0.8899);">Stress</span>
<span class="t" id="t4" style="left:558.24px;top:551.40px;transform:scaleX(0.9424);">Mean Stress</span>
<span class="t" id="t5" style="left:558.16px;top:570.40px;transform:scaleX(0.9483);color:#fff">Effective Stress</span>
<span class="t" id="t6" style="left:558.13px;top:589.60px;transform:scaleX(0.9489);">Flow stress</span>
<span class="t" id="t7" style="left:538.55px;top:608.60px;transform:scaleX(0.9781);">Strain</span>
<span class="t" id="t8" style="left:558.74px;top:627.60px;transform:scaleX(0.9808);">Plastic strain</span>
<span class="t" id="t9" style="left:538.77px;top:646.60px;transform:scaleX(0.9916);">Strain-rate</span>
<span class="halo" id="min" style="left:119.94px;top:162.60px;transform:scaleX(0.9676);">Min :  4.23422</span>
<span class="halo" id="max" style="left:173.29px;top:179.80px;transform:scaleX(0.9392);">Max :  182.669</span>
<div id="frame"></div>
</body>
</html>
